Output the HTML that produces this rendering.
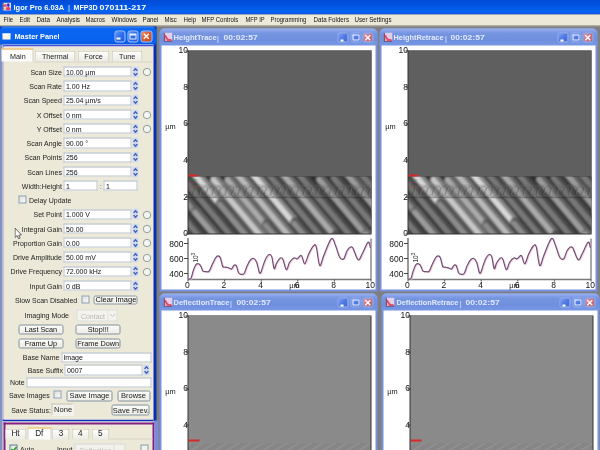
<!DOCTYPE html>
<html><head><meta charset="utf-8"><style>
*{margin:0;padding:0;box-sizing:border-box}
html,body{width:600px;height:450px;overflow:hidden;background:#7f7f7f;font-family:"Liberation Sans",sans-serif;position:relative}
.a{position:absolute}
.t{position:absolute;white-space:nowrap;line-height:1}
.mi{position:absolute;font-size:6.6px;color:#151515;white-space:nowrap;line-height:1}
.lab{position:absolute;font-size:7px;color:#1c1c1c;white-space:nowrap;line-height:1}
.r{text-align:right}
.inp{position:absolute;background:#fff;border:1px solid #b9c4cf;border-top-color:#a9b5c2}
.itx{position:absolute;font-size:7px;color:#111;white-space:nowrap;line-height:1}
.radio{position:absolute;width:8px;height:8px;border-radius:50%;border:1px solid #9a9a9a;background:#f2f2ee}
.btn{position:absolute;border:1px solid #8c9aa8;border-radius:2px;background:linear-gradient(#fbfbf9,#edece6)}
.cb{position:absolute;width:8px;height:8px;border:1px solid #8aa2bd;background:linear-gradient(135deg,#e0e0d8,#fafaf8)}
.tab{position:absolute;border:1px solid #c9c7ba;border-bottom:none;border-radius:2px 2px 0 0;background:linear-gradient(#fdfdfc,#ecebe5)}
.gw{position:absolute;width:218px;background:#7890e0;border-radius:5px 5px 0 0}
.gt{position:absolute;font-size:7.3px;color:#e2eafb;font-weight:bold;white-space:nowrap;line-height:1}
.yl{position:absolute;font-size:7.4px;color:#151515;line-height:1;white-space:nowrap}
.gb{position:absolute;width:11px;height:10.5px;border-radius:2px;border:1px solid #d4dcf6}
</style></head><body><div id="root" style="position:absolute;left:-1px;top:-1px;width:602px;height:452px;overflow:hidden;background:#7f7f7f;transform:translate(0.5px,0.5px);will-change:transform"><div style="position:absolute;left:1px;top:1px;width:601px;height:451px">
<div class="a" style="left:-1px;top:-1px;width:602px;height:14.6px;background:linear-gradient(#004ad4,#0052e0 35%,#0862f2 80%,#0a5cea 92%,#0848c8)"></div>
<div class="a" style="left:-1px;top:13.6px;width:602px;height:11.4px;background:#ece9d8"></div>
<div class="a" style="left:-1px;top:25px;width:602px;height:1px;background:#a9a69a"></div>
<svg class="a" style="left:2px;top:1.5px" width="8.5" height="8.5"><rect x="0" y="0" width="8.5" height="8.5" fill="#eed8e6"/><ellipse cx="2.8" cy="3" rx="1.8" ry="1.6" fill="#e06070"/><ellipse cx="5.6" cy="6.3" rx="2.6" ry="1.8" fill="#d84858"/><ellipse cx="2.5" cy="6.5" rx="1.3" ry="1.2" fill="#f2b8c8"/><ellipse cx="5.8" cy="2.6" rx="1.3" ry="1.8" fill="#2030d8"/><path d="M0.5 0V8.5" stroke="#503040" stroke-width="1"/></svg>
<div class="t" style="left:13.00px;top:3.07px;font-size:7.6px;font-weight:bold;color:#fff;transform:scaleX(0.983);transform-origin:0 0">Igor Pro 6.03A</div>
<div class="t" style="left:67.60px;top:3.37px;font-size:7.6px;color:#e8f0ff">|</div>
<div class="t" style="left:72.50px;top:3.07px;font-size:7.6px;font-weight:bold;color:#fff;transform:scaleX(0.935);transform-origin:0 0">MFP3D</div>
<div class="t" style="left:99.00px;top:3.07px;font-size:7.6px;font-weight:bold;color:#fff;transform:scaleX(1.177);transform-origin:0 0">070111-217</div>
<div class="mi" style="left:2.60px;top:16.04px;font-size:6.8px;transform:scaleX(0.865);transform-origin:0 0">File</div>
<div class="mi" style="left:18.60px;top:16.04px;font-size:6.8px;transform:scaleX(0.895);transform-origin:0 0">Edit</div>
<div class="mi" style="left:35.60px;top:16.04px;font-size:6.8px;transform:scaleX(0.941);transform-origin:0 0">Data</div>
<div class="mi" style="left:55.60px;top:16.04px;font-size:6.8px;transform:scaleX(0.929);transform-origin:0 0">Analysis</div>
<div class="mi" style="left:84.60px;top:16.04px;font-size:6.8px;transform:scaleX(0.873);transform-origin:0 0">Macros</div>
<div class="mi" style="left:110.60px;top:16.04px;font-size:6.8px;transform:scaleX(0.925);transform-origin:0 0">Windows</div>
<div class="mi" style="left:142.40px;top:16.04px;font-size:6.8px;transform:scaleX(0.914);transform-origin:0 0">Panel</div>
<div class="mi" style="left:164.10px;top:16.04px;font-size:6.8px;transform:scaleX(0.871);transform-origin:0 0">Misc</div>
<div class="mi" style="left:182.80px;top:16.04px;font-size:6.8px;transform:scaleX(0.900);transform-origin:0 0">Help</div>
<div class="mi" style="left:201.40px;top:16.04px;font-size:6.8px;transform:scaleX(0.886);transform-origin:0 0">MFP Controls</div>
<div class="mi" style="left:244.60px;top:16.04px;font-size:6.8px;transform:scaleX(0.850);transform-origin:0 0">MFP IP</div>
<div class="mi" style="left:270.30px;top:16.04px;font-size:6.8px;transform:scaleX(0.877);transform-origin:0 0">Programming</div>
<div class="mi" style="left:312.60px;top:16.04px;font-size:6.8px;transform:scaleX(0.912);transform-origin:0 0">Data Folders</div>
<div class="mi" style="left:354.10px;top:16.04px;font-size:6.8px;transform:scaleX(0.906);transform-origin:0 0">User Settings</div>
<div class="a" style="left:-1px;top:26px;width:156.6px;height:395.5px;background:#0a2eb0"></div>
<div class="a" style="left:-1px;top:43px;width:153.5px;height:409px;background:#ece9d8"></div>
<div class="a" style="left:-1px;top:421px;width:156px;height:31px;background:#ece9d8"></div>
<div class="a" style="left:-1px;top:43px;width:2.5px;height:409px;background:#8090c0"></div>
<div class="a" style="left:-1px;top:26px;width:157px;height:18px;border-radius:5px 5px 0 0;background:linear-gradient(#3a8af8,#0a66f2 12%,#0862ee 78%,#085ae4)"></div>
<div class="a" style="left:2px;top:33px;width:8px;height:5.5px;background:#fffbe8;border-top:1px solid #fff"></div>
<div class="t" style="left:14.00px;top:32.08px;font-size:7.7px;font-weight:bold;color:#fff;transform:scaleX(0.950);transform-origin:0 0">Master Panel</div>
<div class="a" style="left:113.8px;top:30px;width:11.4px;height:11.6px;border-radius:2.5px;border:1px solid #a8c4fa;background:linear-gradient(135deg,#6c9cf8,#3070ec 45%,#2058dc)"></div>
<div class="a" style="left:116.39999999999999px;top:37.4px;width:4px;height:1.8px;background:#fff"></div>
<div class="a" style="left:126.8px;top:30px;width:11.4px;height:11.6px;border-radius:2.5px;border:1px solid #a8c4fa;background:linear-gradient(135deg,#6c9cf8,#3070ec 45%,#2058dc)"></div>
<div class="a" style="left:129.1px;top:33.2px;width:6.8px;height:6.2px;border:1px solid #e8f0ff;border-top-width:2px"></div>
<div class="a" style="left:140.2px;top:30px;width:11.4px;height:11.6px;border-radius:2.5px;border:1px solid #a8c4fa;background:linear-gradient(135deg,#f09070,#e05a2a 45%,#d04818)"></div>
<svg class="a" style="left:140.2px;top:30px" width="12" height="12"><path d="M3.3 3.3L8.3 8.3M8.3 3.3L3.3 8.3" stroke="#fff" stroke-width="1.4"/></svg>
<div class="a" style="left:1.8px;top:44.3px;width:151px;height:376.9px;border:1.8px solid #4a4ee2;border-top-width:2.6px;border-bottom:2px solid #0b30c0;border-right:none;border-top-left-radius:2px"></div>
<div class="a" style="left:-0.6px;top:-0.8px;width:601px;height:451px">
<div class="a" style="left:2px;top:49px;width:32px;height:13px;background:#fcfcfb;border-top:1.6px solid #e8a830;border-right:1px solid #d0cec2"></div>
<div class="lab" style="left:2px;width:32px;text-align:center;top:52.51px;font-size:7.2px;color:#1a1a1a">Main</div>
<div class="tab" style="left:35px;top:51.2px;width:40.5px;height:10.5px"></div>
<div class="lab" style="left:35px;width:40.5px;text-align:center;top:52.51px;font-size:7.2px;color:#1a1a1a">Thermal</div>
<div class="tab" style="left:77.3px;top:51.2px;width:32.7px;height:10.5px"></div>
<div class="lab" style="left:77.3px;width:32.7px;text-align:center;top:52.51px;font-size:7.2px;color:#1a1a1a">Force</div>
<div class="tab" style="left:112px;top:51.2px;width:30.5px;height:10.5px"></div>
<div class="lab" style="left:112px;width:30.5px;text-align:center;top:52.51px;font-size:7.2px;color:#1a1a1a">Tune</div>
<div class="a" style="left:34px;top:61.5px;width:119px;height:1px;background:#d8d6ca"></div>
<div class="lab r" style="right:539.00px;top:68.57px;font-size:7.0px;">Scan Size</div>
<div class="inp" style="left:63.8px;top:67.00px;width:68px;height:10.2px"></div>
<div class="itx" style="left:66.00px;top:68.57px;font-size:7.0px;">10.00 µm</div>
<svg class="a" style="left:132.2px;top:66.70px" width="6" height="11"><rect x="0" y="0" width="6" height="11" rx="1" fill="#cdd8f4"/><path d="M1.1 4.4L3 2.3L4.9 4.4M1.1 6.6L3 8.7L4.9 6.6" fill="none" stroke="#3c5cb0" stroke-width="1.3"/></svg>
<svg class="a" style="left:142.1px;top:68.20px" width="9" height="9"><circle cx="4.5" cy="4.5" r="3.7" fill="#f2f4f0" stroke="#8c9490" stroke-width="0.9"/></svg>
<div class="lab r" style="right:539.00px;top:82.82px;font-size:7.0px;">Scan Rate</div>
<div class="inp" style="left:63.8px;top:81.25px;width:68px;height:10.2px"></div>
<div class="itx" style="left:66.00px;top:82.82px;font-size:7.0px;">1.00 Hz</div>
<svg class="a" style="left:132.2px;top:80.95px" width="6" height="11"><rect x="0" y="0" width="6" height="11" rx="1" fill="#cdd8f4"/><path d="M1.1 4.4L3 2.3L4.9 4.4M1.1 6.6L3 8.7L4.9 6.6" fill="none" stroke="#3c5cb0" stroke-width="1.3"/></svg>
<div class="lab r" style="right:539.00px;top:97.07px;font-size:7.0px;">Scan Speed</div>
<div class="inp" style="left:63.8px;top:95.50px;width:68px;height:10.2px"></div>
<div class="itx" style="left:66.00px;top:97.07px;font-size:7.0px;">25.04 µm/s</div>
<svg class="a" style="left:132.2px;top:95.20px" width="6" height="11"><rect x="0" y="0" width="6" height="11" rx="1" fill="#cdd8f4"/><path d="M1.1 4.4L3 2.3L4.9 4.4M1.1 6.6L3 8.7L4.9 6.6" fill="none" stroke="#3c5cb0" stroke-width="1.3"/></svg>
<div class="lab r" style="right:539.00px;top:111.32px;font-size:7.0px;">X Offset</div>
<div class="inp" style="left:63.8px;top:109.75px;width:68px;height:10.2px"></div>
<div class="itx" style="left:66.00px;top:111.32px;font-size:7.0px;">0 nm</div>
<svg class="a" style="left:132.2px;top:109.45px" width="6" height="11"><rect x="0" y="0" width="6" height="11" rx="1" fill="#cdd8f4"/><path d="M1.1 4.4L3 2.3L4.9 4.4M1.1 6.6L3 8.7L4.9 6.6" fill="none" stroke="#3c5cb0" stroke-width="1.3"/></svg>
<svg class="a" style="left:142.1px;top:110.95px" width="9" height="9"><circle cx="4.5" cy="4.5" r="3.7" fill="#f2f4f0" stroke="#8c9490" stroke-width="0.9"/></svg>
<div class="lab r" style="right:539.00px;top:125.57px;font-size:7.0px;">Y Offset</div>
<div class="inp" style="left:63.8px;top:124.00px;width:68px;height:10.2px"></div>
<div class="itx" style="left:66.00px;top:125.57px;font-size:7.0px;">0 nm</div>
<svg class="a" style="left:132.2px;top:123.70px" width="6" height="11"><rect x="0" y="0" width="6" height="11" rx="1" fill="#cdd8f4"/><path d="M1.1 4.4L3 2.3L4.9 4.4M1.1 6.6L3 8.7L4.9 6.6" fill="none" stroke="#3c5cb0" stroke-width="1.3"/></svg>
<svg class="a" style="left:142.1px;top:125.20px" width="9" height="9"><circle cx="4.5" cy="4.5" r="3.7" fill="#f2f4f0" stroke="#8c9490" stroke-width="0.9"/></svg>
<div class="lab r" style="right:539.00px;top:139.82px;font-size:7.0px;">Scan Angle</div>
<div class="inp" style="left:63.8px;top:138.25px;width:68px;height:10.2px"></div>
<div class="itx" style="left:66.00px;top:139.82px;font-size:7.0px;">90.00 °</div>
<svg class="a" style="left:132.2px;top:137.95px" width="6" height="11"><rect x="0" y="0" width="6" height="11" rx="1" fill="#cdd8f4"/><path d="M1.1 4.4L3 2.3L4.9 4.4M1.1 6.6L3 8.7L4.9 6.6" fill="none" stroke="#3c5cb0" stroke-width="1.3"/></svg>
<div class="lab r" style="right:539.00px;top:154.07px;font-size:7.0px;">Scan Points</div>
<div class="inp" style="left:63.8px;top:152.50px;width:68px;height:10.2px"></div>
<div class="itx" style="left:66.00px;top:154.07px;font-size:7.0px;">256</div>
<svg class="a" style="left:132.2px;top:152.20px" width="6" height="11"><rect x="0" y="0" width="6" height="11" rx="1" fill="#cdd8f4"/><path d="M1.1 4.4L3 2.3L4.9 4.4M1.1 6.6L3 8.7L4.9 6.6" fill="none" stroke="#3c5cb0" stroke-width="1.3"/></svg>
<div class="lab r" style="right:539.00px;top:168.32px;font-size:7.0px;">Scan Lines</div>
<div class="inp" style="left:63.8px;top:166.75px;width:68px;height:10.2px"></div>
<div class="itx" style="left:66.00px;top:168.32px;font-size:7.0px;">256</div>
<svg class="a" style="left:132.2px;top:166.45px" width="6" height="11"><rect x="0" y="0" width="6" height="11" rx="1" fill="#cdd8f4"/><path d="M1.1 4.4L3 2.3L4.9 4.4M1.1 6.6L3 8.7L4.9 6.6" fill="none" stroke="#3c5cb0" stroke-width="1.3"/></svg>
<div class="lab r" style="right:539.00px;top:182.57px;font-size:7.0px;">Width:Height</div>
<div class="inp" style="left:64px;top:181.00px;width:33.5px;height:10.2px"></div>
<div class="itx" style="left:66.00px;top:182.57px;font-size:7.0px;">1</div>
<div class="itx" style="left:99.80px;top:182.57px;font-size:7.0px;color:#666">:</div>
<div class="inp" style="left:104px;top:181.00px;width:33.5px;height:10.2px"></div>
<div class="itx" style="left:106.00px;top:182.57px;font-size:7.0px;">1</div>
<div class="cb" style="left:18.7px;top:196px"></div>
<div class="lab" style="left:29.00px;top:196.82px;font-size:7.0px;">Delay Update</div>
<div class="lab r" style="right:539.00px;top:211.07px;font-size:7.0px;">Set Point</div>
<div class="inp" style="left:63.8px;top:209.50px;width:68px;height:10.2px"></div>
<div class="itx" style="left:66.00px;top:211.07px;font-size:7.0px;">1.000 V</div>
<svg class="a" style="left:132.2px;top:209.20px" width="6" height="11"><rect x="0" y="0" width="6" height="11" rx="1" fill="#cdd8f4"/><path d="M1.1 4.4L3 2.3L4.9 4.4M1.1 6.6L3 8.7L4.9 6.6" fill="none" stroke="#3c5cb0" stroke-width="1.3"/></svg>
<svg class="a" style="left:142.1px;top:210.70px" width="9" height="9"><circle cx="4.5" cy="4.5" r="3.7" fill="#f2f4f0" stroke="#8c9490" stroke-width="0.9"/></svg>
<div class="lab r" style="right:539.00px;top:225.32px;font-size:7.0px;">Integral Gain</div>
<div class="inp" style="left:63.8px;top:223.75px;width:68px;height:10.2px"></div>
<div class="itx" style="left:66.00px;top:225.32px;font-size:7.0px;">50.00</div>
<svg class="a" style="left:132.2px;top:223.45px" width="6" height="11"><rect x="0" y="0" width="6" height="11" rx="1" fill="#cdd8f4"/><path d="M1.1 4.4L3 2.3L4.9 4.4M1.1 6.6L3 8.7L4.9 6.6" fill="none" stroke="#3c5cb0" stroke-width="1.3"/></svg>
<svg class="a" style="left:142.1px;top:224.95px" width="9" height="9"><circle cx="4.5" cy="4.5" r="3.7" fill="#f2f4f0" stroke="#8c9490" stroke-width="0.9"/></svg>
<div class="lab r" style="right:539.00px;top:239.57px;font-size:7.0px;">Proportion Gain</div>
<div class="inp" style="left:63.8px;top:238.00px;width:68px;height:10.2px"></div>
<div class="itx" style="left:66.00px;top:239.57px;font-size:7.0px;">0.00</div>
<svg class="a" style="left:132.2px;top:237.70px" width="6" height="11"><rect x="0" y="0" width="6" height="11" rx="1" fill="#cdd8f4"/><path d="M1.1 4.4L3 2.3L4.9 4.4M1.1 6.6L3 8.7L4.9 6.6" fill="none" stroke="#3c5cb0" stroke-width="1.3"/></svg>
<svg class="a" style="left:142.1px;top:239.20px" width="9" height="9"><circle cx="4.5" cy="4.5" r="3.7" fill="#f2f4f0" stroke="#8c9490" stroke-width="0.9"/></svg>
<div class="lab r" style="right:539.00px;top:253.82px;font-size:7.0px;">Drive Amplitude</div>
<div class="inp" style="left:63.8px;top:252.25px;width:68px;height:10.2px"></div>
<div class="itx" style="left:66.00px;top:253.82px;font-size:7.0px;">50.00 mV</div>
<svg class="a" style="left:132.2px;top:251.95px" width="6" height="11"><rect x="0" y="0" width="6" height="11" rx="1" fill="#cdd8f4"/><path d="M1.1 4.4L3 2.3L4.9 4.4M1.1 6.6L3 8.7L4.9 6.6" fill="none" stroke="#3c5cb0" stroke-width="1.3"/></svg>
<svg class="a" style="left:142.1px;top:253.45px" width="9" height="9"><circle cx="4.5" cy="4.5" r="3.7" fill="#f2f4f0" stroke="#8c9490" stroke-width="0.9"/></svg>
<div class="lab r" style="right:539.00px;top:268.07px;font-size:7.0px;">Drive Frequency</div>
<div class="inp" style="left:63.8px;top:266.50px;width:68px;height:10.2px"></div>
<div class="itx" style="left:66.00px;top:268.07px;font-size:7.0px;">72.000 kHz</div>
<svg class="a" style="left:132.2px;top:266.20px" width="6" height="11"><rect x="0" y="0" width="6" height="11" rx="1" fill="#cdd8f4"/><path d="M1.1 4.4L3 2.3L4.9 4.4M1.1 6.6L3 8.7L4.9 6.6" fill="none" stroke="#3c5cb0" stroke-width="1.3"/></svg>
<svg class="a" style="left:142.1px;top:267.70px" width="9" height="9"><circle cx="4.5" cy="4.5" r="3.7" fill="#f2f4f0" stroke="#8c9490" stroke-width="0.9"/></svg>
<div class="lab r" style="right:539.00px;top:282.32px;font-size:7.0px;">Input Gain</div>
<div class="inp" style="left:63.8px;top:280.75px;width:68px;height:10.2px"></div>
<div class="itx" style="left:66.00px;top:282.32px;font-size:7.0px;">0 dB</div>
<svg class="a" style="left:132.2px;top:280.45px" width="6" height="11"><rect x="0" y="0" width="6" height="11" rx="1" fill="#cdd8f4"/><path d="M1.1 4.4L3 2.3L4.9 4.4M1.1 6.6L3 8.7L4.9 6.6" fill="none" stroke="#3c5cb0" stroke-width="1.3"/></svg>
<div class="lab" style="left:15.00px;top:296.57px;font-size:7.0px;">Slow Scan Disabled</div>
<div class="cb" style="left:81.3px;top:296px"></div>
<div class="btn" style="left:93.3px;top:295.3px;width:44px;height:9.5px"></div>
<div class="lab" style="left:95.60px;top:296.25px;font-size:7.5px;color:#111">Clear Image</div>
<div class="lab" style="left:24.70px;top:311.37px;font-size:7.0px;">Imaging Mode</div>
<div class="a" style="left:76.4px;top:310px;width:41.6px;height:11.3px;border:1px solid #d8dcd8;background:#f4f3ee"></div>
<div class="a" style="left:107.5px;top:311px;width:1px;height:9.3px;background:#e4e4e0"></div>
<div class="itx" style="left:81.00px;top:312.67px;font-size:7.0px;color:#b8b8b4">Contact</div>
<svg class="a" style="left:109px;top:312px" width="8" height="8"><path d="M1.5 2.5L4 5L6.5 2.5" stroke="#c4c4c0" fill="none" stroke-width="1"/></svg>
<div class="btn" style="left:18.7px;top:324.7px;width:44.6px;height:10.0px;border-color:#8494a2"></div>
<div class="lab" style="left:18.7px;width:44.6px;text-align:center;top:326.22px;font-size:7.3px;color:#111">Last Scan</div>
<div class="btn" style="left:76px;top:324.7px;width:44.7px;height:10.0px;border-color:#8494a2"></div>
<div class="lab" style="left:76px;width:44.7px;text-align:center;top:326.22px;font-size:7.3px;color:#111">Stop!!!</div>
<div class="btn" style="left:18.7px;top:338.7px;width:44.6px;height:10.0px;border-color:#8494a2"></div>
<div class="lab" style="left:18.7px;width:44.6px;text-align:center;top:340.22px;font-size:7.3px;color:#111">Frame Up</div>
<div class="btn" style="left:76px;top:338.7px;width:44.7px;height:10.0px;border-color:#8494a2"></div>
<div class="lab" style="left:76px;width:44.7px;text-align:center;top:340.22px;font-size:7.3px;color:#111">Frame Down</div>
<div class="lab r" style="right:541.50px;top:353.77px;font-size:7.0px;">Base Name</div>
<div class="inp" style="left:61.3px;top:353px;width:90.7px;height:9.6px"></div>
<div class="itx" style="left:63.50px;top:353.97px;font-size:7.0px;">Image</div>
<div class="lab r" style="right:538.00px;top:366.37px;font-size:7.0px;">Base Suffix</div>
<div class="inp" style="left:65px;top:365px;width:77.7px;height:10.7px"></div>
<div class="itx" style="left:67.00px;top:366.57px;font-size:7.0px;">0007</div>
<svg class="a" style="left:143.5px;top:364.80px" width="6" height="11"><rect x="0" y="0" width="6" height="11" rx="1" fill="#cdd8f4"/><path d="M1.1 4.4L3 2.3L4.9 4.4M1.1 6.6L3 8.7L4.9 6.6" fill="none" stroke="#3c5cb0" stroke-width="1.3"/></svg>
<div class="lab" style="left:10.00px;top:379.07px;font-size:7.0px;">Note</div>
<div class="inp" style="left:27px;top:377.7px;width:125px;height:10.6px"></div>
<div class="lab" style="left:9.00px;top:391.77px;font-size:7.0px;">Save Images</div>
<div class="cb" style="left:54px;top:391px"></div>
<div class="btn" style="left:67px;top:390.6px;width:45.5px;height:10.8px;border-color:#8494a2"></div>
<div class="lab" style="left:67px;width:45px;text-align:center;top:392.05px;font-size:7.5px;color:#1a1a1a">Save Image</div>
<div class="btn" style="left:117.3px;top:390.6px;width:33px;height:10.8px;border-color:#8494a2"></div>
<div class="lab" style="left:117.3px;width:32.7px;text-align:center;top:392.05px;font-size:7.5px;color:#1a1a1a">Browse</div>
<div class="lab r" style="right:550.00px;top:406.37px;font-size:7.0px;">Save Status:</div>
<div class="a" style="left:52px;top:403.7px;width:21.5px;height:12.6px;border:1px solid #f8f8f4;border-top-color:#c4c0b0;border-left-color:#c4c0b0;background:#f3f2ea"></div>
<div class="itx" style="left:54.20px;top:406.17px;font-size:7.6px;color:#222">None</div>
<div class="btn" style="left:111.5px;top:405.2px;width:38.5px;height:10.6px;border-color:#8494a2"></div>
<div class="lab" style="left:112px;width:38px;text-align:center;top:406.45px;font-size:7.5px;color:#1a1a1a">Save Prev.</div>
<div class="a" style="left:4px;top:422.3px;width:151px;height:40px;border:2px solid #862088;border-bottom:none"></div>
<div class="a" style="left:155px;top:421px;width:4px;height:31px;background:#7c8bd8"></div>
<div class="tab" style="left:4.5px;top:428.8px;width:22.2px;height:10.7px"></div>
<div class="lab" style="left:4.5px;width:22.2px;text-align:center;top:430.26px;font-size:8.2px;color:#1a1a1a">Ht</div>
<div class="a" style="left:27.5px;top:427.6px;width:23.7px;height:12px;background:#fcfcfb;border-top:1.6px solid #e8b040;border-left:1px solid #d0cec2;border-right:1px solid #d0cec2"></div>
<div class="lab" style="left:27.5px;width:23.7px;text-align:center;top:430.26px;font-size:8.2px;color:#1a1a1a">Df</div>
<div class="tab" style="left:52px;top:428.8px;width:18.0px;height:10.7px"></div>
<div class="lab" style="left:52px;width:18.0px;text-align:center;top:430.26px;font-size:8.2px;color:#1a1a1a">3</div>
<div class="tab" style="left:71.5px;top:428.8px;width:17.8px;height:10.7px"></div>
<div class="lab" style="left:71.5px;width:17.8px;text-align:center;top:430.26px;font-size:8.2px;color:#1a1a1a">4</div>
<div class="tab" style="left:91.5px;top:428.8px;width:17.8px;height:10.7px"></div>
<div class="lab" style="left:91.5px;width:17.8px;text-align:center;top:430.26px;font-size:8.2px;color:#1a1a1a">5</div>
<div class="a" style="left:110px;top:439px;width:43px;height:1px;background:#d8d6ca"></div>
<div class="cb" style="left:9.3px;top:445px;border-color:#5c7ca0"></div>
<svg class="a" style="left:9.3px;top:445px" width="9" height="9"><path d="M2 4.5L3.8 6.5L7 2.5" stroke="#22a022" stroke-width="1.6" fill="none"/></svg>
<div class="lab" style="left:20.00px;top:446.07px;font-size:7.0px;">Auto</div>
<div class="lab" style="left:57.00px;top:446.07px;font-size:7.0px;">Input</div>
<div class="a" style="left:75px;top:444px;width:51px;height:10px;border:1px solid #d4d8d4;background:#f2f1ec"></div>
<div class="itx" style="left:80.00px;top:446.57px;font-size:7.0px;color:#c0c0bc">Deflection</div>
<div class="a" style="left:114px;top:445px;width:1px;height:8px;background:#dcdcd8"></div>
<div class="a" style="left:141px;top:445px;width:7.5px;height:7px;border:1px solid #8a9aa8;background:#f2f2ee"></div>
<svg class="a" style="left:14.3px;top:227.6px" width="9" height="13"><path d="M0.6 0.6V10L2.7 8L4.1 11.2L5.6 10.6L4.3 7.6L6.9 7.4Z" fill="#fff" stroke="#404040" stroke-width="0.8" stroke-linejoin="round"/></svg>
</div>
<div class="gw" style="left:159px;top:28px;height:263px"></div>
<div class="a" style="left:159px;top:28px;width:218px;height:17px;border-radius:5px 5px 0 0;background:linear-gradient(#9cb4f0,#84a0e8 14%,#7494e0 32%,#7090df 68%,#7698e4)"></div>
<div class="a" style="left:161px;top:44.5px;width:214px;height:244.5px;background:#fff"></div>
<svg class="a" style="left:162.6px;top:31.5px" width="9" height="9.5"><rect x="0" y="0" width="9" height="9" fill="#e6cdea"/><path d="M1.2 2.2C2.6 1.8 3.4 4 4.2 5.6C5 7 6.2 6.2 7 6.6C8 7 8.6 7.6 9 8.6H1.2Z" fill="#e0506e"/><path d="M2 5.5C2.6 6.5 3.6 7.2 3.6 8.6H1.2V5Z" fill="#f2e0f0" opacity="0.6"/><path d="M0.6 0V9H9" stroke="#3a2a40" stroke-width="1.1" fill="none"/></svg>
<div class="gt" style="left:172.90px;top:33.34px;font-size:7.4px;transform:scaleX(1.023);transform-origin:0 0">HeightTrace</div>
<div class="gt" style="left:216.50px;top:33.64px;font-size:7.4px;font-weight:normal">|</div>
<div class="gt" style="left:222.50px;top:33.34px;font-size:7.4px;transform:scaleX(1.155);transform-origin:0 0">00:02:57</div>
<div class="gb" style="left:337px;top:32px;width:10.6px;height:10.4px;border:0.8px solid #98aeea;background:linear-gradient(135deg,#84a6f4,#5079e4 50%,#4068d8)"></div>
<div class="a" style="left:339.6px;top:38.6px;width:3.6px;height:2px;background:#fff"></div>
<div class="gb" style="left:350px;top:32px;width:10.6px;height:10.4px;border:0.8px solid #98aeea;background:linear-gradient(135deg,#84a6f4,#5079e4 50%,#4068d8)"></div>
<div class="a" style="left:352px;top:34px;width:6.8px;height:6.4px;border:0.8px solid #f4f8ff;border-top-width:1.8px"></div>
<div class="gb" style="left:362.2px;top:32px;width:10.6px;height:10.4px;border:0.8px solid #98aeea;background:linear-gradient(135deg,#e4a0b0,#c87080 50%,#b86474)"></div>
<svg class="a" style="left:362.2px;top:32px" width="11" height="11"><path d="M2.8 2.8L7.8 7.8M7.8 2.8L2.8 7.8" stroke="#fff" stroke-width="1.3"/></svg>
<div class="a" style="left:187.0px;top:49.5px;width:184px;height:184px;background:#333"></div>
<div class="a" style="left:187.5px;top:50px;width:183px;height:126px;background:#5f5f5f"></div>
<svg class="a" style="left:187.5px;top:176px" width="183" height="57" viewBox="0 0 183 57"><defs><filter id="rb" x="-20%" y="-20%" width="140%" height="140%"><feGaussianBlur stdDeviation="1.3"/></filter></defs><rect x="0" y="0" width="183" height="57" fill="#2c2c2c"/><g filter="url(#rb)"><path d="M-71.3 -1.6L-11.4 69.8" stroke="rgb(133,133,133)" stroke-width="10.5" stroke-linecap="round"/><path d="M-72.8 -0.8L-12.9 70.6" stroke="rgb(215,215,215)" stroke-width="5.5" stroke-linecap="round"/><path d="M-55.0 -1.2L-3.9 59.7" stroke="rgb(133,133,133)" stroke-width="10.5" stroke-linecap="round"/><path d="M-56.5 -0.4L-5.4 60.5" stroke="rgb(215,215,215)" stroke-width="5.5" stroke-linecap="round"/><path d="M-38.7 -1.2L27.9 78.1" stroke="rgb(74,74,74)" stroke-width="10.5" stroke-linecap="round"/><path d="M-40.2 -0.4L26.4 78.9" stroke="rgb(120,120,120)" stroke-width="5.5" stroke-linecap="round"/><path d="M-25.3 -4.5L7.8 35.0" stroke="rgb(86,86,86)" stroke-width="10.5" stroke-linecap="round"/><path d="M-26.8 -3.7L6.3 35.8" stroke="rgb(140,140,140)" stroke-width="5.5" stroke-linecap="round"/><path d="M7.9 35.1L45.9 80.3" stroke="rgb(96,96,96)" stroke-width="10.5" stroke-linecap="round"/><path d="M6.4 35.9L44.4 81.1" stroke="rgb(155,155,155)" stroke-width="5.5" stroke-linecap="round"/><path d="M-9.1 -4.4L51.6 68.0" stroke="rgb(74,74,74)" stroke-width="10.5" stroke-linecap="round"/><path d="M-10.6 -3.6L50.1 68.8" stroke="rgb(120,120,120)" stroke-width="5.5" stroke-linecap="round"/><path d="M3.5 -7.6L32.5 26.9" stroke="rgb(133,133,133)" stroke-width="10.5" stroke-linecap="round"/><path d="M2.0 -6.8L31.0 27.7" stroke="rgb(215,215,215)" stroke-width="5.5" stroke-linecap="round"/><path d="M32.5 26.9L93.8 99.9" stroke="rgb(86,86,86)" stroke-width="10.5" stroke-linecap="round"/><path d="M31.0 27.7L92.3 100.7" stroke="rgb(140,140,140)" stroke-width="5.5" stroke-linecap="round"/><path d="M26.5 2.6L77.9 63.9" stroke="rgb(124,124,124)" stroke-width="10.5" stroke-linecap="round"/><path d="M25.0 3.4L76.4 64.7" stroke="rgb(200,200,200)" stroke-width="5.5" stroke-linecap="round"/><path d="M40.6 2.7L77.7 47.0" stroke="rgb(105,105,105)" stroke-width="10.5" stroke-linecap="round"/><path d="M39.1 3.5L76.2 47.8" stroke="rgb(170,170,170)" stroke-width="5.5" stroke-linecap="round"/><path d="M78.7 48.1L122.7 100.6" stroke="rgb(86,86,86)" stroke-width="10.5" stroke-linecap="round"/><path d="M77.2 48.9L121.2 101.4" stroke="rgb(140,140,140)" stroke-width="5.5" stroke-linecap="round"/><path d="M48.3 -5.1L111.4 70.0" stroke="rgb(114,114,114)" stroke-width="10.5" stroke-linecap="round"/><path d="M46.8 -4.3L109.9 70.8" stroke="rgb(185,185,185)" stroke-width="5.5" stroke-linecap="round"/><path d="M63.9 -5.1L105.8 44.9" stroke="rgb(133,133,133)" stroke-width="10.5" stroke-linecap="round"/><path d="M62.4 -4.3L104.3 45.7" stroke="rgb(215,215,215)" stroke-width="5.5" stroke-linecap="round"/><path d="M106.8 46.0L164.8 115.2" stroke="rgb(86,86,86)" stroke-width="10.5" stroke-linecap="round"/><path d="M105.3 46.8L163.3 116.0" stroke="rgb(140,140,140)" stroke-width="5.5" stroke-linecap="round"/><path d="M76.6 -8.5L146.3 74.5" stroke="rgb(74,74,74)" stroke-width="10.5" stroke-linecap="round"/><path d="M75.1 -7.7L144.8 75.3" stroke="rgb(120,120,120)" stroke-width="5.5" stroke-linecap="round"/><path d="M94.8 -4.2L146.7 57.6" stroke="rgb(105,105,105)" stroke-width="10.5" stroke-linecap="round"/><path d="M93.3 -3.4L145.2 58.4" stroke="rgb(170,170,170)" stroke-width="5.5" stroke-linecap="round"/><path d="M147.8 59.0L200.9 122.3" stroke="rgb(74,74,74)" stroke-width="10.5" stroke-linecap="round"/><path d="M146.3 59.8L199.4 123.1" stroke="rgb(120,120,120)" stroke-width="5.5" stroke-linecap="round"/><path d="M112.7 -1.5L181.5 80.4" stroke="rgb(74,74,74)" stroke-width="10.5" stroke-linecap="round"/><path d="M111.2 -0.7L180.0 81.2" stroke="rgb(120,120,120)" stroke-width="5.5" stroke-linecap="round"/><path d="M132.2 2.4L175.5 54.0" stroke="rgb(96,96,96)" stroke-width="10.5" stroke-linecap="round"/><path d="M130.7 3.2L174.0 54.8" stroke="rgb(155,155,155)" stroke-width="5.5" stroke-linecap="round"/><path d="M178.4 57.4L217.8 104.4" stroke="rgb(105,105,105)" stroke-width="10.5" stroke-linecap="round"/><path d="M176.9 58.2L216.3 105.2" stroke="rgb(170,170,170)" stroke-width="5.5" stroke-linecap="round"/><path d="M146.5 0.6L211.3 77.9" stroke="rgb(74,74,74)" stroke-width="10.5" stroke-linecap="round"/><path d="M145.0 1.4L209.8 78.7" stroke="rgb(120,120,120)" stroke-width="5.5" stroke-linecap="round"/><path d="M156.9 -6.6L207.2 53.4" stroke="rgb(96,96,96)" stroke-width="10.5" stroke-linecap="round"/><path d="M155.4 -5.8L205.7 54.2" stroke="rgb(155,155,155)" stroke-width="5.5" stroke-linecap="round"/><path d="M210.2 56.9L253.3 108.3" stroke="rgb(124,124,124)" stroke-width="10.5" stroke-linecap="round"/><path d="M208.7 57.7L251.8 109.1" stroke="rgb(200,200,200)" stroke-width="5.5" stroke-linecap="round"/><path d="M172.4 -5.3L208.8 38.0" stroke="rgb(74,74,74)" stroke-width="10.5" stroke-linecap="round"/><path d="M170.9 -4.5L207.3 38.8" stroke="rgb(120,120,120)" stroke-width="5.5" stroke-linecap="round"/><path d="M210.8 40.4L269.8 110.8" stroke="rgb(96,96,96)" stroke-width="10.5" stroke-linecap="round"/><path d="M209.3 41.2L268.3 111.6" stroke="rgb(155,155,155)" stroke-width="5.5" stroke-linecap="round"/></g><rect x="0" y="8" width="183" height="13" fill="rgba(90,90,90,0.22)"/><ellipse cx="2.0" cy="15" rx="3.4" ry="5.8" fill="none" stroke="rgba(25,25,25,0.28)" stroke-width="0.7" transform="rotate(35 2.0 15)"/><ellipse cx="3.0" cy="14.5" rx="3.4" ry="5.8" fill="none" stroke="rgba(220,220,220,0.18)" stroke-width="0.6" transform="rotate(35 3.0 14.5)"/><ellipse cx="8.5" cy="15" rx="3.4" ry="5.8" fill="none" stroke="rgba(25,25,25,0.28)" stroke-width="0.7" transform="rotate(35 8.5 15)"/><ellipse cx="9.5" cy="14.5" rx="3.4" ry="5.8" fill="none" stroke="rgba(220,220,220,0.18)" stroke-width="0.6" transform="rotate(35 9.5 14.5)"/><ellipse cx="15.0" cy="15" rx="3.4" ry="5.8" fill="none" stroke="rgba(25,25,25,0.28)" stroke-width="0.7" transform="rotate(35 15.0 15)"/><ellipse cx="16.0" cy="14.5" rx="3.4" ry="5.8" fill="none" stroke="rgba(220,220,220,0.18)" stroke-width="0.6" transform="rotate(35 16.0 14.5)"/><ellipse cx="21.5" cy="15" rx="3.4" ry="5.8" fill="none" stroke="rgba(25,25,25,0.28)" stroke-width="0.7" transform="rotate(35 21.5 15)"/><ellipse cx="22.5" cy="14.5" rx="3.4" ry="5.8" fill="none" stroke="rgba(220,220,220,0.18)" stroke-width="0.6" transform="rotate(35 22.5 14.5)"/><ellipse cx="28.0" cy="15" rx="3.4" ry="5.8" fill="none" stroke="rgba(25,25,25,0.28)" stroke-width="0.7" transform="rotate(35 28.0 15)"/><ellipse cx="29.0" cy="14.5" rx="3.4" ry="5.8" fill="none" stroke="rgba(220,220,220,0.18)" stroke-width="0.6" transform="rotate(35 29.0 14.5)"/><ellipse cx="34.5" cy="15" rx="3.4" ry="5.8" fill="none" stroke="rgba(25,25,25,0.28)" stroke-width="0.7" transform="rotate(35 34.5 15)"/><ellipse cx="35.5" cy="14.5" rx="3.4" ry="5.8" fill="none" stroke="rgba(220,220,220,0.18)" stroke-width="0.6" transform="rotate(35 35.5 14.5)"/><ellipse cx="41.0" cy="15" rx="3.4" ry="5.8" fill="none" stroke="rgba(25,25,25,0.28)" stroke-width="0.7" transform="rotate(35 41.0 15)"/><ellipse cx="42.0" cy="14.5" rx="3.4" ry="5.8" fill="none" stroke="rgba(220,220,220,0.18)" stroke-width="0.6" transform="rotate(35 42.0 14.5)"/><ellipse cx="47.5" cy="15" rx="3.4" ry="5.8" fill="none" stroke="rgba(25,25,25,0.28)" stroke-width="0.7" transform="rotate(35 47.5 15)"/><ellipse cx="48.5" cy="14.5" rx="3.4" ry="5.8" fill="none" stroke="rgba(220,220,220,0.18)" stroke-width="0.6" transform="rotate(35 48.5 14.5)"/><ellipse cx="54.0" cy="15" rx="3.4" ry="5.8" fill="none" stroke="rgba(25,25,25,0.28)" stroke-width="0.7" transform="rotate(35 54.0 15)"/><ellipse cx="55.0" cy="14.5" rx="3.4" ry="5.8" fill="none" stroke="rgba(220,220,220,0.18)" stroke-width="0.6" transform="rotate(35 55.0 14.5)"/><ellipse cx="60.5" cy="15" rx="3.4" ry="5.8" fill="none" stroke="rgba(25,25,25,0.28)" stroke-width="0.7" transform="rotate(35 60.5 15)"/><ellipse cx="61.5" cy="14.5" rx="3.4" ry="5.8" fill="none" stroke="rgba(220,220,220,0.18)" stroke-width="0.6" transform="rotate(35 61.5 14.5)"/><ellipse cx="67.0" cy="15" rx="3.4" ry="5.8" fill="none" stroke="rgba(25,25,25,0.28)" stroke-width="0.7" transform="rotate(35 67.0 15)"/><ellipse cx="68.0" cy="14.5" rx="3.4" ry="5.8" fill="none" stroke="rgba(220,220,220,0.18)" stroke-width="0.6" transform="rotate(35 68.0 14.5)"/><ellipse cx="73.5" cy="15" rx="3.4" ry="5.8" fill="none" stroke="rgba(25,25,25,0.28)" stroke-width="0.7" transform="rotate(35 73.5 15)"/><ellipse cx="74.5" cy="14.5" rx="3.4" ry="5.8" fill="none" stroke="rgba(220,220,220,0.18)" stroke-width="0.6" transform="rotate(35 74.5 14.5)"/><ellipse cx="80.0" cy="15" rx="3.4" ry="5.8" fill="none" stroke="rgba(25,25,25,0.28)" stroke-width="0.7" transform="rotate(35 80.0 15)"/><ellipse cx="81.0" cy="14.5" rx="3.4" ry="5.8" fill="none" stroke="rgba(220,220,220,0.18)" stroke-width="0.6" transform="rotate(35 81.0 14.5)"/><ellipse cx="86.5" cy="15" rx="3.4" ry="5.8" fill="none" stroke="rgba(25,25,25,0.28)" stroke-width="0.7" transform="rotate(35 86.5 15)"/><ellipse cx="87.5" cy="14.5" rx="3.4" ry="5.8" fill="none" stroke="rgba(220,220,220,0.18)" stroke-width="0.6" transform="rotate(35 87.5 14.5)"/><ellipse cx="93.0" cy="15" rx="3.4" ry="5.8" fill="none" stroke="rgba(25,25,25,0.28)" stroke-width="0.7" transform="rotate(35 93.0 15)"/><ellipse cx="94.0" cy="14.5" rx="3.4" ry="5.8" fill="none" stroke="rgba(220,220,220,0.18)" stroke-width="0.6" transform="rotate(35 94.0 14.5)"/><ellipse cx="99.5" cy="15" rx="3.4" ry="5.8" fill="none" stroke="rgba(25,25,25,0.28)" stroke-width="0.7" transform="rotate(35 99.5 15)"/><ellipse cx="100.5" cy="14.5" rx="3.4" ry="5.8" fill="none" stroke="rgba(220,220,220,0.18)" stroke-width="0.6" transform="rotate(35 100.5 14.5)"/><ellipse cx="106.0" cy="15" rx="3.4" ry="5.8" fill="none" stroke="rgba(25,25,25,0.28)" stroke-width="0.7" transform="rotate(35 106.0 15)"/><ellipse cx="107.0" cy="14.5" rx="3.4" ry="5.8" fill="none" stroke="rgba(220,220,220,0.18)" stroke-width="0.6" transform="rotate(35 107.0 14.5)"/><ellipse cx="112.5" cy="15" rx="3.4" ry="5.8" fill="none" stroke="rgba(25,25,25,0.28)" stroke-width="0.7" transform="rotate(35 112.5 15)"/><ellipse cx="113.5" cy="14.5" rx="3.4" ry="5.8" fill="none" stroke="rgba(220,220,220,0.18)" stroke-width="0.6" transform="rotate(35 113.5 14.5)"/><ellipse cx="119.0" cy="15" rx="3.4" ry="5.8" fill="none" stroke="rgba(25,25,25,0.28)" stroke-width="0.7" transform="rotate(35 119.0 15)"/><ellipse cx="120.0" cy="14.5" rx="3.4" ry="5.8" fill="none" stroke="rgba(220,220,220,0.18)" stroke-width="0.6" transform="rotate(35 120.0 14.5)"/><ellipse cx="125.5" cy="15" rx="3.4" ry="5.8" fill="none" stroke="rgba(25,25,25,0.28)" stroke-width="0.7" transform="rotate(35 125.5 15)"/><ellipse cx="126.5" cy="14.5" rx="3.4" ry="5.8" fill="none" stroke="rgba(220,220,220,0.18)" stroke-width="0.6" transform="rotate(35 126.5 14.5)"/><ellipse cx="132.0" cy="15" rx="3.4" ry="5.8" fill="none" stroke="rgba(25,25,25,0.28)" stroke-width="0.7" transform="rotate(35 132.0 15)"/><ellipse cx="133.0" cy="14.5" rx="3.4" ry="5.8" fill="none" stroke="rgba(220,220,220,0.18)" stroke-width="0.6" transform="rotate(35 133.0 14.5)"/><ellipse cx="138.5" cy="15" rx="3.4" ry="5.8" fill="none" stroke="rgba(25,25,25,0.28)" stroke-width="0.7" transform="rotate(35 138.5 15)"/><ellipse cx="139.5" cy="14.5" rx="3.4" ry="5.8" fill="none" stroke="rgba(220,220,220,0.18)" stroke-width="0.6" transform="rotate(35 139.5 14.5)"/><ellipse cx="145.0" cy="15" rx="3.4" ry="5.8" fill="none" stroke="rgba(25,25,25,0.28)" stroke-width="0.7" transform="rotate(35 145.0 15)"/><ellipse cx="146.0" cy="14.5" rx="3.4" ry="5.8" fill="none" stroke="rgba(220,220,220,0.18)" stroke-width="0.6" transform="rotate(35 146.0 14.5)"/><ellipse cx="151.5" cy="15" rx="3.4" ry="5.8" fill="none" stroke="rgba(25,25,25,0.28)" stroke-width="0.7" transform="rotate(35 151.5 15)"/><ellipse cx="152.5" cy="14.5" rx="3.4" ry="5.8" fill="none" stroke="rgba(220,220,220,0.18)" stroke-width="0.6" transform="rotate(35 152.5 14.5)"/><ellipse cx="158.0" cy="15" rx="3.4" ry="5.8" fill="none" stroke="rgba(25,25,25,0.28)" stroke-width="0.7" transform="rotate(35 158.0 15)"/><ellipse cx="159.0" cy="14.5" rx="3.4" ry="5.8" fill="none" stroke="rgba(220,220,220,0.18)" stroke-width="0.6" transform="rotate(35 159.0 14.5)"/><ellipse cx="164.5" cy="15" rx="3.4" ry="5.8" fill="none" stroke="rgba(25,25,25,0.28)" stroke-width="0.7" transform="rotate(35 164.5 15)"/><ellipse cx="165.5" cy="14.5" rx="3.4" ry="5.8" fill="none" stroke="rgba(220,220,220,0.18)" stroke-width="0.6" transform="rotate(35 165.5 14.5)"/><ellipse cx="171.0" cy="15" rx="3.4" ry="5.8" fill="none" stroke="rgba(25,25,25,0.28)" stroke-width="0.7" transform="rotate(35 171.0 15)"/><ellipse cx="172.0" cy="14.5" rx="3.4" ry="5.8" fill="none" stroke="rgba(220,220,220,0.18)" stroke-width="0.6" transform="rotate(35 172.0 14.5)"/><ellipse cx="177.5" cy="15" rx="3.4" ry="5.8" fill="none" stroke="rgba(25,25,25,0.28)" stroke-width="0.7" transform="rotate(35 177.5 15)"/><ellipse cx="178.5" cy="14.5" rx="3.4" ry="5.8" fill="none" stroke="rgba(220,220,220,0.18)" stroke-width="0.6" transform="rotate(35 178.5 14.5)"/><ellipse cx="184.0" cy="15" rx="3.4" ry="5.8" fill="none" stroke="rgba(25,25,25,0.28)" stroke-width="0.7" transform="rotate(35 184.0 15)"/><ellipse cx="185.0" cy="14.5" rx="3.4" ry="5.8" fill="none" stroke="rgba(220,220,220,0.18)" stroke-width="0.6" transform="rotate(35 185.0 14.5)"/><path d="M1 3.5H9" stroke="rgba(60,160,80,0.5)" stroke-width="0.8"/><path d="M1 6H8" stroke="rgba(200,60,140,0.45)" stroke-width="0.8"/><path d="M1 10.5H10" stroke="rgba(220,70,70,0.45)" stroke-width="0.8"/><path d="M0 21.2H183" stroke="rgba(30,30,30,0.45)" stroke-width="0.8"/></svg>
<div class="a" style="left:187.5px;top:173.6px;width:10.5px;height:2.8px;background:#d42828;border-radius:0 1px 1px 0"></div>
<div class="yl r" style="right:413.50px;top:45.10px;font-size:8.5px;">10</div>
<div class="a" style="left:185.0px;top:49.5px;width:2.5px;height:1px;background:#333"></div>
<div class="yl r" style="right:413.50px;top:81.70px;font-size:8.5px;">8</div>
<div class="a" style="left:185.0px;top:86.1px;width:2.5px;height:1px;background:#333"></div>
<div class="yl r" style="right:413.50px;top:118.30px;font-size:8.5px;">6</div>
<div class="a" style="left:185.0px;top:122.7px;width:2.5px;height:1px;background:#333"></div>
<div class="yl r" style="right:413.50px;top:154.90px;font-size:8.5px;">4</div>
<div class="a" style="left:185.0px;top:159.3px;width:2.5px;height:1px;background:#333"></div>
<div class="yl r" style="right:413.50px;top:191.50px;font-size:8.5px;">2</div>
<div class="a" style="left:185.0px;top:195.9px;width:2.5px;height:1px;background:#333"></div>
<div class="yl r" style="right:413.50px;top:228.10px;font-size:8.5px;">0</div>
<div class="a" style="left:185.0px;top:232.5px;width:2.5px;height:1px;background:#333"></div>
<div class="yl" style="left:164.80px;top:121.94px;font-size:7.4px;">µm</div>
<svg class="a" style="left:159px;top:28px" width="218" height="263" viewBox="159 28 218 263"><path d="M187.5 237.5 V279" fill="none" stroke="#333" stroke-width="1"/><path d="M187.5 279 H370.5 V238.0" fill="none" stroke="#7a7a7a" stroke-width="1.3"/><path d="M183.5 243 H187.5" stroke="#444" stroke-width="1"/><path d="M183.5 258 H187.5" stroke="#444" stroke-width="1"/><path d="M183.5 273 H187.5" stroke="#444" stroke-width="1"/><path d="M187.5 279 V281" stroke="#555" stroke-width="1"/><path d="M224.1 279 V281" stroke="#555" stroke-width="1"/><path d="M260.7 279 V281" stroke="#555" stroke-width="1"/><path d="M297.3 279 V281" stroke="#555" stroke-width="1"/><path d="M333.9 279 V281" stroke="#555" stroke-width="1"/><path d="M370.5 279 V281" stroke="#555" stroke-width="1"/><path d="M188.2 278.5 C188.6 278.4 189.7 279.1 190.5 277.7 C191.3 276.2 192.1 272.0 192.9 269.8 C193.7 267.6 194.4 265.4 195.3 264.3 C196.2 263.2 197.6 263.1 198.5 263.5 C199.4 263.9 200.2 265.5 200.8 266.7 C201.5 267.9 201.6 269.9 202.4 270.6 C203.2 271.3 204.6 271.1 205.6 271.1 C206.6 271.1 207.6 271.9 208.7 270.6 C209.8 269.3 210.8 265.7 211.9 263.5 C213.0 261.3 214.2 258.6 215.1 257.2 C216.0 255.8 216.7 255.3 217.5 255.3 C218.3 255.3 219.0 255.4 219.8 257.2 C220.6 259.0 221.3 264.3 222.2 265.9 C223.1 267.5 224.3 266.4 225.4 266.7 C226.5 267.0 227.6 267.2 228.5 267.5 C229.4 267.8 230.1 269.0 230.9 268.6 C231.7 268.2 232.5 265.7 233.3 265.1 C234.1 264.5 234.9 263.9 235.7 265.1 C236.5 266.3 237.2 270.8 238.0 272.2 C238.8 273.6 239.5 273.7 240.4 273.8 C241.3 273.9 242.6 274.4 243.6 273.0 C244.6 271.6 245.6 267.4 246.7 265.1 C247.8 262.9 248.8 260.7 249.9 259.5 C251.0 258.3 252.1 257.6 253.1 258.0 C254.1 258.4 255.3 259.7 256.2 261.9 C257.1 264.1 257.9 269.7 258.6 271.4 C259.3 273.1 259.5 273.2 260.2 272.2 C260.9 271.1 261.7 267.6 262.6 265.1 C263.5 262.6 264.6 259.1 265.7 257.2 C266.8 255.3 268.0 254.1 268.9 254.0 C269.8 253.9 270.5 254.0 271.3 256.4 C272.1 258.8 272.9 267.1 273.7 268.2 C274.5 269.2 274.9 264.5 276.0 262.7 C277.1 260.9 278.9 258.1 280.0 257.5 C281.1 256.9 281.5 257.2 282.5 259.2 C283.5 261.1 284.7 268.8 285.8 269.2 C286.9 269.6 287.9 263.6 289.2 261.7 C290.4 259.8 292.1 258.1 293.3 257.5 C294.6 256.9 295.4 258.7 296.7 258.3 C297.9 257.9 299.6 254.2 300.8 255.0 C302.1 255.8 302.9 263.6 304.2 263.3 C305.4 263.0 306.8 256.4 308.3 253.3 C309.8 250.2 312.1 246.1 313.3 245.0 C314.6 243.9 314.8 243.4 315.8 246.7 C316.8 250.0 317.9 263.6 319.2 265.0 C320.4 266.4 321.4 259.4 323.3 255.0 C325.2 250.6 328.9 240.0 330.8 238.3 C332.8 236.6 333.6 241.9 335.0 245.0 C336.4 248.1 337.8 254.5 339.2 256.7 C340.6 258.9 342.1 259.4 343.3 258.3 C344.6 257.2 345.3 251.9 346.7 250.0 C348.1 248.1 349.9 245.2 351.7 246.7 C353.5 248.2 355.8 258.1 357.5 259.2 C359.2 260.3 360.0 256.2 361.7 253.3 C363.4 250.4 366.1 242.7 367.5 241.7 C368.9 240.7 369.6 246.5 370.0 247.5" fill="none" stroke="#f0b8dc" stroke-width="1.4" opacity="0.7" transform="translate(0.8,0.5)"/><path d="M188.2 278.5 C188.6 278.4 189.7 279.1 190.5 277.7 C191.3 276.2 192.1 272.0 192.9 269.8 C193.7 267.6 194.4 265.4 195.3 264.3 C196.2 263.2 197.6 263.1 198.5 263.5 C199.4 263.9 200.2 265.5 200.8 266.7 C201.5 267.9 201.6 269.9 202.4 270.6 C203.2 271.3 204.6 271.1 205.6 271.1 C206.6 271.1 207.6 271.9 208.7 270.6 C209.8 269.3 210.8 265.7 211.9 263.5 C213.0 261.3 214.2 258.6 215.1 257.2 C216.0 255.8 216.7 255.3 217.5 255.3 C218.3 255.3 219.0 255.4 219.8 257.2 C220.6 259.0 221.3 264.3 222.2 265.9 C223.1 267.5 224.3 266.4 225.4 266.7 C226.5 267.0 227.6 267.2 228.5 267.5 C229.4 267.8 230.1 269.0 230.9 268.6 C231.7 268.2 232.5 265.7 233.3 265.1 C234.1 264.5 234.9 263.9 235.7 265.1 C236.5 266.3 237.2 270.8 238.0 272.2 C238.8 273.6 239.5 273.7 240.4 273.8 C241.3 273.9 242.6 274.4 243.6 273.0 C244.6 271.6 245.6 267.4 246.7 265.1 C247.8 262.9 248.8 260.7 249.9 259.5 C251.0 258.3 252.1 257.6 253.1 258.0 C254.1 258.4 255.3 259.7 256.2 261.9 C257.1 264.1 257.9 269.7 258.6 271.4 C259.3 273.1 259.5 273.2 260.2 272.2 C260.9 271.1 261.7 267.6 262.6 265.1 C263.5 262.6 264.6 259.1 265.7 257.2 C266.8 255.3 268.0 254.1 268.9 254.0 C269.8 253.9 270.5 254.0 271.3 256.4 C272.1 258.8 272.9 267.1 273.7 268.2 C274.5 269.2 274.9 264.5 276.0 262.7 C277.1 260.9 278.9 258.1 280.0 257.5 C281.1 256.9 281.5 257.2 282.5 259.2 C283.5 261.1 284.7 268.8 285.8 269.2 C286.9 269.6 287.9 263.6 289.2 261.7 C290.4 259.8 292.1 258.1 293.3 257.5 C294.6 256.9 295.4 258.7 296.7 258.3 C297.9 257.9 299.6 254.2 300.8 255.0 C302.1 255.8 302.9 263.6 304.2 263.3 C305.4 263.0 306.8 256.4 308.3 253.3 C309.8 250.2 312.1 246.1 313.3 245.0 C314.6 243.9 314.8 243.4 315.8 246.7 C316.8 250.0 317.9 263.6 319.2 265.0 C320.4 266.4 321.4 259.4 323.3 255.0 C325.2 250.6 328.9 240.0 330.8 238.3 C332.8 236.6 333.6 241.9 335.0 245.0 C336.4 248.1 337.8 254.5 339.2 256.7 C340.6 258.9 342.1 259.4 343.3 258.3 C344.6 257.2 345.3 251.9 346.7 250.0 C348.1 248.1 349.9 245.2 351.7 246.7 C353.5 248.2 355.8 258.1 357.5 259.2 C359.2 260.3 360.0 256.2 361.7 253.3 C363.4 250.4 366.1 242.7 367.5 241.7 C368.9 240.7 369.6 246.5 370.0 247.5" fill="none" stroke="#704e70" stroke-width="1.2"/></svg>
<div class="yl r" style="right:418.00px;top:239.10px;font-size:8.5px;">800</div>
<div class="yl r" style="right:418.00px;top:254.10px;font-size:8.5px;">600</div>
<div class="yl r" style="right:418.00px;top:269.10px;font-size:8.5px;">400</div>
<div class="yl" style="left:176.8px;width:20px;text-align:center;top:280.10px;font-size:8.5px">0</div>
<div class="yl" style="left:213.4px;width:20px;text-align:center;top:280.10px;font-size:8.5px">2</div>
<div class="yl" style="left:250.0px;width:20px;text-align:center;top:280.10px;font-size:8.5px">4</div>
<div class="yl" style="left:286.6px;width:20px;text-align:center;top:280.10px;font-size:8.5px">6</div>
<div class="yl" style="left:323.2px;width:20px;text-align:center;top:280.10px;font-size:8.5px">8</div>
<div class="yl" style="left:359.8px;width:20px;text-align:center;top:280.10px;font-size:8.5px">10</div>
<div class="yl" style="left:288.70px;top:280.74px;font-size:7.4px;">µm</div>
<div class="yl" style="left:191.7px;top:262.0px;transform:rotate(-90deg);transform-origin:0 0;font-size:6.4px;color:#333">10<span style="font-size:5px;position:relative;top:-3.4px">3</span></div>
<div class="gw" style="left:379px;top:28px;height:263px"></div>
<div class="a" style="left:379px;top:28px;width:218px;height:17px;border-radius:5px 5px 0 0;background:linear-gradient(#9cb4f0,#84a0e8 14%,#7494e0 32%,#7090df 68%,#7698e4)"></div>
<div class="a" style="left:381px;top:44.5px;width:214px;height:244.5px;background:#fff"></div>
<svg class="a" style="left:382.6px;top:31.5px" width="9" height="9.5"><rect x="0" y="0" width="9" height="9" fill="#e6cdea"/><path d="M1.2 2.2C2.6 1.8 3.4 4 4.2 5.6C5 7 6.2 6.2 7 6.6C8 7 8.6 7.6 9 8.6H1.2Z" fill="#e0506e"/><path d="M2 5.5C2.6 6.5 3.6 7.2 3.6 8.6H1.2V5Z" fill="#f2e0f0" opacity="0.6"/><path d="M0.6 0V9H9" stroke="#3a2a40" stroke-width="1.1" fill="none"/></svg>
<div class="gt" style="left:392.90px;top:33.34px;font-size:7.4px;transform:scaleX(0.998);transform-origin:0 0">HeightRetrace</div>
<div class="gt" style="left:444.50px;top:33.64px;font-size:7.4px;font-weight:normal">|</div>
<div class="gt" style="left:450.10px;top:33.34px;font-size:7.4px;transform:scaleX(1.155);transform-origin:0 0">00:02:57</div>
<div class="gb" style="left:557px;top:32px;width:10.6px;height:10.4px;border:0.8px solid #98aeea;background:linear-gradient(135deg,#84a6f4,#5079e4 50%,#4068d8)"></div>
<div class="a" style="left:559.6px;top:38.6px;width:3.6px;height:2px;background:#fff"></div>
<div class="gb" style="left:570px;top:32px;width:10.6px;height:10.4px;border:0.8px solid #98aeea;background:linear-gradient(135deg,#84a6f4,#5079e4 50%,#4068d8)"></div>
<div class="a" style="left:572px;top:34px;width:6.8px;height:6.4px;border:0.8px solid #f4f8ff;border-top-width:1.8px"></div>
<div class="gb" style="left:582.2px;top:32px;width:10.6px;height:10.4px;border:0.8px solid #98aeea;background:linear-gradient(135deg,#e4a0b0,#c87080 50%,#b86474)"></div>
<svg class="a" style="left:582.2px;top:32px" width="11" height="11"><path d="M2.8 2.8L7.8 7.8M7.8 2.8L2.8 7.8" stroke="#fff" stroke-width="1.3"/></svg>
<div class="a" style="left:407.0px;top:49.5px;width:184px;height:184px;background:#333"></div>
<div class="a" style="left:407.5px;top:50px;width:183px;height:126px;background:#5f5f5f"></div>
<svg class="a" style="left:407.5px;top:176px" width="183" height="57" viewBox="0 0 183 57"><defs><filter id="rb" x="-20%" y="-20%" width="140%" height="140%"><feGaussianBlur stdDeviation="1.3"/></filter></defs><rect x="0" y="0" width="183" height="57" fill="#2c2c2c"/><g filter="url(#rb)"><path d="M-71.3 -1.6L-11.4 69.8" stroke="rgb(133,133,133)" stroke-width="10.5" stroke-linecap="round"/><path d="M-72.8 -0.8L-12.9 70.6" stroke="rgb(215,215,215)" stroke-width="5.5" stroke-linecap="round"/><path d="M-55.0 -1.2L-3.9 59.7" stroke="rgb(133,133,133)" stroke-width="10.5" stroke-linecap="round"/><path d="M-56.5 -0.4L-5.4 60.5" stroke="rgb(215,215,215)" stroke-width="5.5" stroke-linecap="round"/><path d="M-38.7 -1.2L27.9 78.1" stroke="rgb(74,74,74)" stroke-width="10.5" stroke-linecap="round"/><path d="M-40.2 -0.4L26.4 78.9" stroke="rgb(120,120,120)" stroke-width="5.5" stroke-linecap="round"/><path d="M-25.3 -4.5L7.8 35.0" stroke="rgb(86,86,86)" stroke-width="10.5" stroke-linecap="round"/><path d="M-26.8 -3.7L6.3 35.8" stroke="rgb(140,140,140)" stroke-width="5.5" stroke-linecap="round"/><path d="M7.9 35.1L45.9 80.3" stroke="rgb(96,96,96)" stroke-width="10.5" stroke-linecap="round"/><path d="M6.4 35.9L44.4 81.1" stroke="rgb(155,155,155)" stroke-width="5.5" stroke-linecap="round"/><path d="M-9.1 -4.4L51.6 68.0" stroke="rgb(74,74,74)" stroke-width="10.5" stroke-linecap="round"/><path d="M-10.6 -3.6L50.1 68.8" stroke="rgb(120,120,120)" stroke-width="5.5" stroke-linecap="round"/><path d="M3.5 -7.6L32.5 26.9" stroke="rgb(133,133,133)" stroke-width="10.5" stroke-linecap="round"/><path d="M2.0 -6.8L31.0 27.7" stroke="rgb(215,215,215)" stroke-width="5.5" stroke-linecap="round"/><path d="M32.5 26.9L93.8 99.9" stroke="rgb(86,86,86)" stroke-width="10.5" stroke-linecap="round"/><path d="M31.0 27.7L92.3 100.7" stroke="rgb(140,140,140)" stroke-width="5.5" stroke-linecap="round"/><path d="M26.5 2.6L77.9 63.9" stroke="rgb(124,124,124)" stroke-width="10.5" stroke-linecap="round"/><path d="M25.0 3.4L76.4 64.7" stroke="rgb(200,200,200)" stroke-width="5.5" stroke-linecap="round"/><path d="M40.6 2.7L77.7 47.0" stroke="rgb(105,105,105)" stroke-width="10.5" stroke-linecap="round"/><path d="M39.1 3.5L76.2 47.8" stroke="rgb(170,170,170)" stroke-width="5.5" stroke-linecap="round"/><path d="M78.7 48.1L122.7 100.6" stroke="rgb(86,86,86)" stroke-width="10.5" stroke-linecap="round"/><path d="M77.2 48.9L121.2 101.4" stroke="rgb(140,140,140)" stroke-width="5.5" stroke-linecap="round"/><path d="M48.3 -5.1L111.4 70.0" stroke="rgb(114,114,114)" stroke-width="10.5" stroke-linecap="round"/><path d="M46.8 -4.3L109.9 70.8" stroke="rgb(185,185,185)" stroke-width="5.5" stroke-linecap="round"/><path d="M63.9 -5.1L105.8 44.9" stroke="rgb(133,133,133)" stroke-width="10.5" stroke-linecap="round"/><path d="M62.4 -4.3L104.3 45.7" stroke="rgb(215,215,215)" stroke-width="5.5" stroke-linecap="round"/><path d="M106.8 46.0L164.8 115.2" stroke="rgb(86,86,86)" stroke-width="10.5" stroke-linecap="round"/><path d="M105.3 46.8L163.3 116.0" stroke="rgb(140,140,140)" stroke-width="5.5" stroke-linecap="round"/><path d="M76.6 -8.5L146.3 74.5" stroke="rgb(74,74,74)" stroke-width="10.5" stroke-linecap="round"/><path d="M75.1 -7.7L144.8 75.3" stroke="rgb(120,120,120)" stroke-width="5.5" stroke-linecap="round"/><path d="M94.8 -4.2L146.7 57.6" stroke="rgb(105,105,105)" stroke-width="10.5" stroke-linecap="round"/><path d="M93.3 -3.4L145.2 58.4" stroke="rgb(170,170,170)" stroke-width="5.5" stroke-linecap="round"/><path d="M147.8 59.0L200.9 122.3" stroke="rgb(74,74,74)" stroke-width="10.5" stroke-linecap="round"/><path d="M146.3 59.8L199.4 123.1" stroke="rgb(120,120,120)" stroke-width="5.5" stroke-linecap="round"/><path d="M112.7 -1.5L181.5 80.4" stroke="rgb(74,74,74)" stroke-width="10.5" stroke-linecap="round"/><path d="M111.2 -0.7L180.0 81.2" stroke="rgb(120,120,120)" stroke-width="5.5" stroke-linecap="round"/><path d="M132.2 2.4L175.5 54.0" stroke="rgb(96,96,96)" stroke-width="10.5" stroke-linecap="round"/><path d="M130.7 3.2L174.0 54.8" stroke="rgb(155,155,155)" stroke-width="5.5" stroke-linecap="round"/><path d="M178.4 57.4L217.8 104.4" stroke="rgb(105,105,105)" stroke-width="10.5" stroke-linecap="round"/><path d="M176.9 58.2L216.3 105.2" stroke="rgb(170,170,170)" stroke-width="5.5" stroke-linecap="round"/><path d="M146.5 0.6L211.3 77.9" stroke="rgb(74,74,74)" stroke-width="10.5" stroke-linecap="round"/><path d="M145.0 1.4L209.8 78.7" stroke="rgb(120,120,120)" stroke-width="5.5" stroke-linecap="round"/><path d="M156.9 -6.6L207.2 53.4" stroke="rgb(96,96,96)" stroke-width="10.5" stroke-linecap="round"/><path d="M155.4 -5.8L205.7 54.2" stroke="rgb(155,155,155)" stroke-width="5.5" stroke-linecap="round"/><path d="M210.2 56.9L253.3 108.3" stroke="rgb(124,124,124)" stroke-width="10.5" stroke-linecap="round"/><path d="M208.7 57.7L251.8 109.1" stroke="rgb(200,200,200)" stroke-width="5.5" stroke-linecap="round"/><path d="M172.4 -5.3L208.8 38.0" stroke="rgb(74,74,74)" stroke-width="10.5" stroke-linecap="round"/><path d="M170.9 -4.5L207.3 38.8" stroke="rgb(120,120,120)" stroke-width="5.5" stroke-linecap="round"/><path d="M210.8 40.4L269.8 110.8" stroke="rgb(96,96,96)" stroke-width="10.5" stroke-linecap="round"/><path d="M209.3 41.2L268.3 111.6" stroke="rgb(155,155,155)" stroke-width="5.5" stroke-linecap="round"/></g><rect x="0" y="8" width="183" height="13" fill="rgba(90,90,90,0.22)"/><ellipse cx="2.0" cy="15" rx="3.4" ry="5.8" fill="none" stroke="rgba(25,25,25,0.28)" stroke-width="0.7" transform="rotate(35 2.0 15)"/><ellipse cx="3.0" cy="14.5" rx="3.4" ry="5.8" fill="none" stroke="rgba(220,220,220,0.18)" stroke-width="0.6" transform="rotate(35 3.0 14.5)"/><ellipse cx="8.5" cy="15" rx="3.4" ry="5.8" fill="none" stroke="rgba(25,25,25,0.28)" stroke-width="0.7" transform="rotate(35 8.5 15)"/><ellipse cx="9.5" cy="14.5" rx="3.4" ry="5.8" fill="none" stroke="rgba(220,220,220,0.18)" stroke-width="0.6" transform="rotate(35 9.5 14.5)"/><ellipse cx="15.0" cy="15" rx="3.4" ry="5.8" fill="none" stroke="rgba(25,25,25,0.28)" stroke-width="0.7" transform="rotate(35 15.0 15)"/><ellipse cx="16.0" cy="14.5" rx="3.4" ry="5.8" fill="none" stroke="rgba(220,220,220,0.18)" stroke-width="0.6" transform="rotate(35 16.0 14.5)"/><ellipse cx="21.5" cy="15" rx="3.4" ry="5.8" fill="none" stroke="rgba(25,25,25,0.28)" stroke-width="0.7" transform="rotate(35 21.5 15)"/><ellipse cx="22.5" cy="14.5" rx="3.4" ry="5.8" fill="none" stroke="rgba(220,220,220,0.18)" stroke-width="0.6" transform="rotate(35 22.5 14.5)"/><ellipse cx="28.0" cy="15" rx="3.4" ry="5.8" fill="none" stroke="rgba(25,25,25,0.28)" stroke-width="0.7" transform="rotate(35 28.0 15)"/><ellipse cx="29.0" cy="14.5" rx="3.4" ry="5.8" fill="none" stroke="rgba(220,220,220,0.18)" stroke-width="0.6" transform="rotate(35 29.0 14.5)"/><ellipse cx="34.5" cy="15" rx="3.4" ry="5.8" fill="none" stroke="rgba(25,25,25,0.28)" stroke-width="0.7" transform="rotate(35 34.5 15)"/><ellipse cx="35.5" cy="14.5" rx="3.4" ry="5.8" fill="none" stroke="rgba(220,220,220,0.18)" stroke-width="0.6" transform="rotate(35 35.5 14.5)"/><ellipse cx="41.0" cy="15" rx="3.4" ry="5.8" fill="none" stroke="rgba(25,25,25,0.28)" stroke-width="0.7" transform="rotate(35 41.0 15)"/><ellipse cx="42.0" cy="14.5" rx="3.4" ry="5.8" fill="none" stroke="rgba(220,220,220,0.18)" stroke-width="0.6" transform="rotate(35 42.0 14.5)"/><ellipse cx="47.5" cy="15" rx="3.4" ry="5.8" fill="none" stroke="rgba(25,25,25,0.28)" stroke-width="0.7" transform="rotate(35 47.5 15)"/><ellipse cx="48.5" cy="14.5" rx="3.4" ry="5.8" fill="none" stroke="rgba(220,220,220,0.18)" stroke-width="0.6" transform="rotate(35 48.5 14.5)"/><ellipse cx="54.0" cy="15" rx="3.4" ry="5.8" fill="none" stroke="rgba(25,25,25,0.28)" stroke-width="0.7" transform="rotate(35 54.0 15)"/><ellipse cx="55.0" cy="14.5" rx="3.4" ry="5.8" fill="none" stroke="rgba(220,220,220,0.18)" stroke-width="0.6" transform="rotate(35 55.0 14.5)"/><ellipse cx="60.5" cy="15" rx="3.4" ry="5.8" fill="none" stroke="rgba(25,25,25,0.28)" stroke-width="0.7" transform="rotate(35 60.5 15)"/><ellipse cx="61.5" cy="14.5" rx="3.4" ry="5.8" fill="none" stroke="rgba(220,220,220,0.18)" stroke-width="0.6" transform="rotate(35 61.5 14.5)"/><ellipse cx="67.0" cy="15" rx="3.4" ry="5.8" fill="none" stroke="rgba(25,25,25,0.28)" stroke-width="0.7" transform="rotate(35 67.0 15)"/><ellipse cx="68.0" cy="14.5" rx="3.4" ry="5.8" fill="none" stroke="rgba(220,220,220,0.18)" stroke-width="0.6" transform="rotate(35 68.0 14.5)"/><ellipse cx="73.5" cy="15" rx="3.4" ry="5.8" fill="none" stroke="rgba(25,25,25,0.28)" stroke-width="0.7" transform="rotate(35 73.5 15)"/><ellipse cx="74.5" cy="14.5" rx="3.4" ry="5.8" fill="none" stroke="rgba(220,220,220,0.18)" stroke-width="0.6" transform="rotate(35 74.5 14.5)"/><ellipse cx="80.0" cy="15" rx="3.4" ry="5.8" fill="none" stroke="rgba(25,25,25,0.28)" stroke-width="0.7" transform="rotate(35 80.0 15)"/><ellipse cx="81.0" cy="14.5" rx="3.4" ry="5.8" fill="none" stroke="rgba(220,220,220,0.18)" stroke-width="0.6" transform="rotate(35 81.0 14.5)"/><ellipse cx="86.5" cy="15" rx="3.4" ry="5.8" fill="none" stroke="rgba(25,25,25,0.28)" stroke-width="0.7" transform="rotate(35 86.5 15)"/><ellipse cx="87.5" cy="14.5" rx="3.4" ry="5.8" fill="none" stroke="rgba(220,220,220,0.18)" stroke-width="0.6" transform="rotate(35 87.5 14.5)"/><ellipse cx="93.0" cy="15" rx="3.4" ry="5.8" fill="none" stroke="rgba(25,25,25,0.28)" stroke-width="0.7" transform="rotate(35 93.0 15)"/><ellipse cx="94.0" cy="14.5" rx="3.4" ry="5.8" fill="none" stroke="rgba(220,220,220,0.18)" stroke-width="0.6" transform="rotate(35 94.0 14.5)"/><ellipse cx="99.5" cy="15" rx="3.4" ry="5.8" fill="none" stroke="rgba(25,25,25,0.28)" stroke-width="0.7" transform="rotate(35 99.5 15)"/><ellipse cx="100.5" cy="14.5" rx="3.4" ry="5.8" fill="none" stroke="rgba(220,220,220,0.18)" stroke-width="0.6" transform="rotate(35 100.5 14.5)"/><ellipse cx="106.0" cy="15" rx="3.4" ry="5.8" fill="none" stroke="rgba(25,25,25,0.28)" stroke-width="0.7" transform="rotate(35 106.0 15)"/><ellipse cx="107.0" cy="14.5" rx="3.4" ry="5.8" fill="none" stroke="rgba(220,220,220,0.18)" stroke-width="0.6" transform="rotate(35 107.0 14.5)"/><ellipse cx="112.5" cy="15" rx="3.4" ry="5.8" fill="none" stroke="rgba(25,25,25,0.28)" stroke-width="0.7" transform="rotate(35 112.5 15)"/><ellipse cx="113.5" cy="14.5" rx="3.4" ry="5.8" fill="none" stroke="rgba(220,220,220,0.18)" stroke-width="0.6" transform="rotate(35 113.5 14.5)"/><ellipse cx="119.0" cy="15" rx="3.4" ry="5.8" fill="none" stroke="rgba(25,25,25,0.28)" stroke-width="0.7" transform="rotate(35 119.0 15)"/><ellipse cx="120.0" cy="14.5" rx="3.4" ry="5.8" fill="none" stroke="rgba(220,220,220,0.18)" stroke-width="0.6" transform="rotate(35 120.0 14.5)"/><ellipse cx="125.5" cy="15" rx="3.4" ry="5.8" fill="none" stroke="rgba(25,25,25,0.28)" stroke-width="0.7" transform="rotate(35 125.5 15)"/><ellipse cx="126.5" cy="14.5" rx="3.4" ry="5.8" fill="none" stroke="rgba(220,220,220,0.18)" stroke-width="0.6" transform="rotate(35 126.5 14.5)"/><ellipse cx="132.0" cy="15" rx="3.4" ry="5.8" fill="none" stroke="rgba(25,25,25,0.28)" stroke-width="0.7" transform="rotate(35 132.0 15)"/><ellipse cx="133.0" cy="14.5" rx="3.4" ry="5.8" fill="none" stroke="rgba(220,220,220,0.18)" stroke-width="0.6" transform="rotate(35 133.0 14.5)"/><ellipse cx="138.5" cy="15" rx="3.4" ry="5.8" fill="none" stroke="rgba(25,25,25,0.28)" stroke-width="0.7" transform="rotate(35 138.5 15)"/><ellipse cx="139.5" cy="14.5" rx="3.4" ry="5.8" fill="none" stroke="rgba(220,220,220,0.18)" stroke-width="0.6" transform="rotate(35 139.5 14.5)"/><ellipse cx="145.0" cy="15" rx="3.4" ry="5.8" fill="none" stroke="rgba(25,25,25,0.28)" stroke-width="0.7" transform="rotate(35 145.0 15)"/><ellipse cx="146.0" cy="14.5" rx="3.4" ry="5.8" fill="none" stroke="rgba(220,220,220,0.18)" stroke-width="0.6" transform="rotate(35 146.0 14.5)"/><ellipse cx="151.5" cy="15" rx="3.4" ry="5.8" fill="none" stroke="rgba(25,25,25,0.28)" stroke-width="0.7" transform="rotate(35 151.5 15)"/><ellipse cx="152.5" cy="14.5" rx="3.4" ry="5.8" fill="none" stroke="rgba(220,220,220,0.18)" stroke-width="0.6" transform="rotate(35 152.5 14.5)"/><ellipse cx="158.0" cy="15" rx="3.4" ry="5.8" fill="none" stroke="rgba(25,25,25,0.28)" stroke-width="0.7" transform="rotate(35 158.0 15)"/><ellipse cx="159.0" cy="14.5" rx="3.4" ry="5.8" fill="none" stroke="rgba(220,220,220,0.18)" stroke-width="0.6" transform="rotate(35 159.0 14.5)"/><ellipse cx="164.5" cy="15" rx="3.4" ry="5.8" fill="none" stroke="rgba(25,25,25,0.28)" stroke-width="0.7" transform="rotate(35 164.5 15)"/><ellipse cx="165.5" cy="14.5" rx="3.4" ry="5.8" fill="none" stroke="rgba(220,220,220,0.18)" stroke-width="0.6" transform="rotate(35 165.5 14.5)"/><ellipse cx="171.0" cy="15" rx="3.4" ry="5.8" fill="none" stroke="rgba(25,25,25,0.28)" stroke-width="0.7" transform="rotate(35 171.0 15)"/><ellipse cx="172.0" cy="14.5" rx="3.4" ry="5.8" fill="none" stroke="rgba(220,220,220,0.18)" stroke-width="0.6" transform="rotate(35 172.0 14.5)"/><ellipse cx="177.5" cy="15" rx="3.4" ry="5.8" fill="none" stroke="rgba(25,25,25,0.28)" stroke-width="0.7" transform="rotate(35 177.5 15)"/><ellipse cx="178.5" cy="14.5" rx="3.4" ry="5.8" fill="none" stroke="rgba(220,220,220,0.18)" stroke-width="0.6" transform="rotate(35 178.5 14.5)"/><ellipse cx="184.0" cy="15" rx="3.4" ry="5.8" fill="none" stroke="rgba(25,25,25,0.28)" stroke-width="0.7" transform="rotate(35 184.0 15)"/><ellipse cx="185.0" cy="14.5" rx="3.4" ry="5.8" fill="none" stroke="rgba(220,220,220,0.18)" stroke-width="0.6" transform="rotate(35 185.0 14.5)"/><path d="M1 3.5H9" stroke="rgba(60,160,80,0.5)" stroke-width="0.8"/><path d="M1 6H8" stroke="rgba(200,60,140,0.45)" stroke-width="0.8"/><path d="M1 10.5H10" stroke="rgba(220,70,70,0.45)" stroke-width="0.8"/><path d="M0 21.2H183" stroke="rgba(30,30,30,0.45)" stroke-width="0.8"/></svg>
<div class="a" style="left:407.5px;top:173.6px;width:10.5px;height:2.8px;background:#d42828;border-radius:0 1px 1px 0"></div>
<div class="yl r" style="right:193.50px;top:45.10px;font-size:8.5px;">10</div>
<div class="a" style="left:405.0px;top:49.5px;width:2.5px;height:1px;background:#333"></div>
<div class="yl r" style="right:193.50px;top:81.70px;font-size:8.5px;">8</div>
<div class="a" style="left:405.0px;top:86.1px;width:2.5px;height:1px;background:#333"></div>
<div class="yl r" style="right:193.50px;top:118.30px;font-size:8.5px;">6</div>
<div class="a" style="left:405.0px;top:122.7px;width:2.5px;height:1px;background:#333"></div>
<div class="yl r" style="right:193.50px;top:154.90px;font-size:8.5px;">4</div>
<div class="a" style="left:405.0px;top:159.3px;width:2.5px;height:1px;background:#333"></div>
<div class="yl r" style="right:193.50px;top:191.50px;font-size:8.5px;">2</div>
<div class="a" style="left:405.0px;top:195.9px;width:2.5px;height:1px;background:#333"></div>
<div class="yl r" style="right:193.50px;top:228.10px;font-size:8.5px;">0</div>
<div class="a" style="left:405.0px;top:232.5px;width:2.5px;height:1px;background:#333"></div>
<div class="yl" style="left:384.80px;top:121.94px;font-size:7.4px;">µm</div>
<svg class="a" style="left:379px;top:28px" width="218" height="263" viewBox="379 28 218 263"><path d="M407.5 237.5 V279" fill="none" stroke="#333" stroke-width="1"/><path d="M407.5 279 H590.5 V238.0" fill="none" stroke="#7a7a7a" stroke-width="1.3"/><path d="M403.5 243 H407.5" stroke="#444" stroke-width="1"/><path d="M403.5 258 H407.5" stroke="#444" stroke-width="1"/><path d="M403.5 273 H407.5" stroke="#444" stroke-width="1"/><path d="M407.5 279 V281" stroke="#555" stroke-width="1"/><path d="M444.1 279 V281" stroke="#555" stroke-width="1"/><path d="M480.7 279 V281" stroke="#555" stroke-width="1"/><path d="M517.3 279 V281" stroke="#555" stroke-width="1"/><path d="M553.9 279 V281" stroke="#555" stroke-width="1"/><path d="M590.5 279 V281" stroke="#555" stroke-width="1"/><path d="M408.2 278.5 C408.6 278.4 409.7 279.1 410.5 277.7 C411.3 276.2 412.1 272.0 412.9 269.8 C413.7 267.6 414.4 265.4 415.3 264.3 C416.2 263.2 417.6 263.1 418.5 263.5 C419.4 263.9 420.2 265.5 420.8 266.7 C421.4 267.9 421.6 269.9 422.4 270.6 C423.2 271.3 424.6 271.1 425.6 271.1 C426.7 271.1 427.6 271.9 428.7 270.6 C429.8 269.3 430.8 265.7 431.9 263.5 C433.0 261.3 434.2 258.6 435.1 257.2 C436.0 255.8 436.7 255.3 437.5 255.3 C438.3 255.3 439.0 255.4 439.8 257.2 C440.6 259.0 441.3 264.3 442.2 265.9 C443.1 267.5 444.3 266.4 445.4 266.7 C446.4 267.0 447.6 267.2 448.5 267.5 C449.4 267.8 450.1 269.0 450.9 268.6 C451.7 268.2 452.5 265.7 453.3 265.1 C454.1 264.5 454.9 263.9 455.7 265.1 C456.5 266.3 457.2 270.8 458.0 272.2 C458.8 273.6 459.5 273.7 460.4 273.8 C461.3 273.9 462.6 274.4 463.6 273.0 C464.7 271.6 465.6 267.4 466.7 265.1 C467.8 262.9 468.8 260.7 469.9 259.5 C471.0 258.3 472.1 257.6 473.1 258.0 C474.2 258.4 475.3 259.7 476.2 261.9 C477.1 264.1 477.9 269.7 478.6 271.4 C479.3 273.1 479.5 273.2 480.2 272.2 C480.9 271.1 481.7 267.6 482.6 265.1 C483.5 262.6 484.6 259.1 485.7 257.2 C486.8 255.3 488.0 254.1 488.9 254.0 C489.8 253.9 490.5 254.0 491.3 256.4 C492.1 258.8 492.9 267.1 493.7 268.2 C494.5 269.2 494.9 264.5 496.0 262.7 C497.1 260.9 498.9 258.1 500.0 257.5 C501.1 256.9 501.5 257.2 502.5 259.2 C503.5 261.1 504.7 268.8 505.8 269.2 C506.9 269.6 507.9 263.6 509.2 261.7 C510.4 259.8 512.0 258.1 513.3 257.5 C514.5 256.9 515.5 258.7 516.7 258.3 C518.0 257.9 519.5 254.2 520.8 255.0 C522.0 255.8 523.0 263.6 524.2 263.3 C525.5 263.0 526.8 256.4 528.3 253.3 C529.8 250.2 532.0 246.1 533.3 245.0 C534.5 243.9 534.8 243.4 535.8 246.7 C536.8 250.0 538.0 263.6 539.2 265.0 C540.5 266.4 541.4 259.4 543.3 255.0 C545.2 250.6 548.8 240.0 550.8 238.3 C552.8 236.6 553.6 241.9 555.0 245.0 C556.4 248.1 557.8 254.5 559.2 256.7 C560.6 258.9 562.0 259.4 563.3 258.3 C564.5 257.2 565.3 251.9 566.7 250.0 C568.1 248.1 569.9 245.2 571.7 246.7 C573.5 248.2 575.8 258.1 577.5 259.2 C579.2 260.3 580.0 256.2 581.7 253.3 C583.4 250.4 586.1 242.7 587.5 241.7 C588.9 240.7 589.6 246.5 590.0 247.5" fill="none" stroke="#f0b8dc" stroke-width="1.4" opacity="0.7" transform="translate(0.8,0.5)"/><path d="M408.2 278.5 C408.6 278.4 409.7 279.1 410.5 277.7 C411.3 276.2 412.1 272.0 412.9 269.8 C413.7 267.6 414.4 265.4 415.3 264.3 C416.2 263.2 417.6 263.1 418.5 263.5 C419.4 263.9 420.2 265.5 420.8 266.7 C421.4 267.9 421.6 269.9 422.4 270.6 C423.2 271.3 424.6 271.1 425.6 271.1 C426.7 271.1 427.6 271.9 428.7 270.6 C429.8 269.3 430.8 265.7 431.9 263.5 C433.0 261.3 434.2 258.6 435.1 257.2 C436.0 255.8 436.7 255.3 437.5 255.3 C438.3 255.3 439.0 255.4 439.8 257.2 C440.6 259.0 441.3 264.3 442.2 265.9 C443.1 267.5 444.3 266.4 445.4 266.7 C446.4 267.0 447.6 267.2 448.5 267.5 C449.4 267.8 450.1 269.0 450.9 268.6 C451.7 268.2 452.5 265.7 453.3 265.1 C454.1 264.5 454.9 263.9 455.7 265.1 C456.5 266.3 457.2 270.8 458.0 272.2 C458.8 273.6 459.5 273.7 460.4 273.8 C461.3 273.9 462.6 274.4 463.6 273.0 C464.7 271.6 465.6 267.4 466.7 265.1 C467.8 262.9 468.8 260.7 469.9 259.5 C471.0 258.3 472.1 257.6 473.1 258.0 C474.2 258.4 475.3 259.7 476.2 261.9 C477.1 264.1 477.9 269.7 478.6 271.4 C479.3 273.1 479.5 273.2 480.2 272.2 C480.9 271.1 481.7 267.6 482.6 265.1 C483.5 262.6 484.6 259.1 485.7 257.2 C486.8 255.3 488.0 254.1 488.9 254.0 C489.8 253.9 490.5 254.0 491.3 256.4 C492.1 258.8 492.9 267.1 493.7 268.2 C494.5 269.2 494.9 264.5 496.0 262.7 C497.1 260.9 498.9 258.1 500.0 257.5 C501.1 256.9 501.5 257.2 502.5 259.2 C503.5 261.1 504.7 268.8 505.8 269.2 C506.9 269.6 507.9 263.6 509.2 261.7 C510.4 259.8 512.0 258.1 513.3 257.5 C514.5 256.9 515.5 258.7 516.7 258.3 C518.0 257.9 519.5 254.2 520.8 255.0 C522.0 255.8 523.0 263.6 524.2 263.3 C525.5 263.0 526.8 256.4 528.3 253.3 C529.8 250.2 532.0 246.1 533.3 245.0 C534.5 243.9 534.8 243.4 535.8 246.7 C536.8 250.0 538.0 263.6 539.2 265.0 C540.5 266.4 541.4 259.4 543.3 255.0 C545.2 250.6 548.8 240.0 550.8 238.3 C552.8 236.6 553.6 241.9 555.0 245.0 C556.4 248.1 557.8 254.5 559.2 256.7 C560.6 258.9 562.0 259.4 563.3 258.3 C564.5 257.2 565.3 251.9 566.7 250.0 C568.1 248.1 569.9 245.2 571.7 246.7 C573.5 248.2 575.8 258.1 577.5 259.2 C579.2 260.3 580.0 256.2 581.7 253.3 C583.4 250.4 586.1 242.7 587.5 241.7 C588.9 240.7 589.6 246.5 590.0 247.5" fill="none" stroke="#704e70" stroke-width="1.2"/></svg>
<div class="yl r" style="right:198.00px;top:239.10px;font-size:8.5px;">800</div>
<div class="yl r" style="right:198.00px;top:254.10px;font-size:8.5px;">600</div>
<div class="yl r" style="right:198.00px;top:269.10px;font-size:8.5px;">400</div>
<div class="yl" style="left:396.8px;width:20px;text-align:center;top:280.10px;font-size:8.5px">0</div>
<div class="yl" style="left:433.4px;width:20px;text-align:center;top:280.10px;font-size:8.5px">2</div>
<div class="yl" style="left:470.0px;width:20px;text-align:center;top:280.10px;font-size:8.5px">4</div>
<div class="yl" style="left:506.6px;width:20px;text-align:center;top:280.10px;font-size:8.5px">6</div>
<div class="yl" style="left:543.2px;width:20px;text-align:center;top:280.10px;font-size:8.5px">8</div>
<div class="yl" style="left:579.8px;width:20px;text-align:center;top:280.10px;font-size:8.5px">10</div>
<div class="yl" style="left:508.70px;top:280.74px;font-size:7.4px;">µm</div>
<div class="yl" style="left:411.7px;top:262.0px;transform:rotate(-90deg);transform-origin:0 0;font-size:6.4px;color:#333">10<span style="font-size:5px;position:relative;top:-3.4px">3</span></div>
<div class="gw" style="left:159px;top:293px;height:159px"></div>
<div class="a" style="left:159px;top:293px;width:218px;height:17px;border-radius:5px 5px 0 0;background:linear-gradient(#9cb4f0,#84a0e8 14%,#7494e0 32%,#7090df 68%,#7698e4)"></div>
<div class="a" style="left:161px;top:309.5px;width:214px;height:142.5px;background:#fff"></div>
<svg class="a" style="left:162.6px;top:296.5px" width="9" height="9.5"><rect x="0" y="0" width="9" height="9" fill="#e6cdea"/><path d="M1.2 2.2C2.6 1.8 3.4 4 4.2 5.6C5 7 6.2 6.2 7 6.6C8 7 8.6 7.6 9 8.6H1.2Z" fill="#e0506e"/><path d="M2 5.5C2.6 6.5 3.6 7.2 3.6 8.6H1.2V5Z" fill="#f2e0f0" opacity="0.6"/><path d="M0.6 0V9H9" stroke="#3a2a40" stroke-width="1.1" fill="none"/></svg>
<div class="gt" style="left:172.90px;top:298.34px;font-size:7.4px;transform:scaleX(1.017);transform-origin:0 0">DeflectionTrace</div>
<div class="gt" style="left:229.50px;top:298.64px;font-size:7.4px;font-weight:normal">|</div>
<div class="gt" style="left:235.50px;top:298.34px;font-size:7.4px;transform:scaleX(1.155);transform-origin:0 0">00:02:57</div>
<div class="gb" style="left:337px;top:297px;width:10.6px;height:10.4px;border:0.8px solid #98aeea;background:linear-gradient(135deg,#84a6f4,#5079e4 50%,#4068d8)"></div>
<div class="a" style="left:339.6px;top:303.6px;width:3.6px;height:2px;background:#fff"></div>
<div class="gb" style="left:350px;top:297px;width:10.6px;height:10.4px;border:0.8px solid #98aeea;background:linear-gradient(135deg,#84a6f4,#5079e4 50%,#4068d8)"></div>
<div class="a" style="left:352px;top:299px;width:6.8px;height:6.4px;border:0.8px solid #f4f8ff;border-top-width:1.8px"></div>
<div class="gb" style="left:362.2px;top:297px;width:10.6px;height:10.4px;border:0.8px solid #98aeea;background:linear-gradient(135deg,#e4a0b0,#c87080 50%,#b86474)"></div>
<svg class="a" style="left:362.2px;top:297px" width="11" height="11"><path d="M2.8 2.8L7.8 7.8M7.8 2.8L2.8 7.8" stroke="#fff" stroke-width="1.3"/></svg>
<div class="a" style="left:187.0px;top:314.5px;width:184px;height:138px;background:#333"></div>
<div class="a" style="left:187.5px;top:315px;width:182.5px;height:137px;background:#8a8a8a"></div>
<div class="a" style="left:187.5px;top:438.8px;width:11px;height:2.2px;background:#d82828"></div>
<div class="a" style="left:187.5px;top:443px;width:183px;height:10px;background:repeating-linear-gradient(150deg,rgba(255,255,255,0.04) 0 2px,rgba(0,0,0,0.04) 2px 6px)"></div>
<div class="yl r" style="right:413.50px;top:310.10px;font-size:8.5px;">10</div>
<div class="a" style="left:185.0px;top:314.5px;width:2.5px;height:1px;background:#333"></div>
<div class="yl r" style="right:413.50px;top:346.70px;font-size:8.5px;">8</div>
<div class="a" style="left:185.0px;top:351.1px;width:2.5px;height:1px;background:#333"></div>
<div class="yl r" style="right:413.50px;top:383.30px;font-size:8.5px;">6</div>
<div class="a" style="left:185.0px;top:387.7px;width:2.5px;height:1px;background:#333"></div>
<div class="yl r" style="right:413.50px;top:419.90px;font-size:8.5px;">4</div>
<div class="a" style="left:185.0px;top:424.3px;width:2.5px;height:1px;background:#333"></div>
<div class="yl" style="left:164.80px;top:386.94px;font-size:7.4px;">µm</div>
<div class="gw" style="left:381px;top:293px;height:159px"></div>
<div class="a" style="left:381px;top:293px;width:218px;height:17px;border-radius:5px 5px 0 0;background:linear-gradient(#9cb4f0,#84a0e8 14%,#7494e0 32%,#7090df 68%,#7698e4)"></div>
<div class="a" style="left:383px;top:309.5px;width:214px;height:142.5px;background:#fff"></div>
<svg class="a" style="left:384.6px;top:296.5px" width="9" height="9.5"><rect x="0" y="0" width="9" height="9" fill="#e6cdea"/><path d="M1.2 2.2C2.6 1.8 3.4 4 4.2 5.6C5 7 6.2 6.2 7 6.6C8 7 8.6 7.6 9 8.6H1.2Z" fill="#e0506e"/><path d="M2 5.5C2.6 6.5 3.6 7.2 3.6 8.6H1.2V5Z" fill="#f2e0f0" opacity="0.6"/><path d="M0.6 0V9H9" stroke="#3a2a40" stroke-width="1.1" fill="none"/></svg>
<div class="gt" style="left:395.70px;top:298.34px;font-size:7.4px;transform:scaleX(0.985);transform-origin:0 0">DeflectionRetrace</div>
<div class="gt" style="left:459.30px;top:298.64px;font-size:7.4px;font-weight:normal">|</div>
<div class="gt" style="left:465.30px;top:298.34px;font-size:7.4px;transform:scaleX(1.155);transform-origin:0 0">00:02:57</div>
<div class="gb" style="left:559px;top:297px;width:10.6px;height:10.4px;border:0.8px solid #98aeea;background:linear-gradient(135deg,#84a6f4,#5079e4 50%,#4068d8)"></div>
<div class="a" style="left:561.6px;top:303.6px;width:3.6px;height:2px;background:#fff"></div>
<div class="gb" style="left:572px;top:297px;width:10.6px;height:10.4px;border:0.8px solid #98aeea;background:linear-gradient(135deg,#84a6f4,#5079e4 50%,#4068d8)"></div>
<div class="a" style="left:574px;top:299px;width:6.8px;height:6.4px;border:0.8px solid #f4f8ff;border-top-width:1.8px"></div>
<div class="gb" style="left:584.2px;top:297px;width:10.6px;height:10.4px;border:0.8px solid #98aeea;background:linear-gradient(135deg,#e4a0b0,#c87080 50%,#b86474)"></div>
<svg class="a" style="left:584.2px;top:297px" width="11" height="11"><path d="M2.8 2.8L7.8 7.8M7.8 2.8L2.8 7.8" stroke="#fff" stroke-width="1.3"/></svg>
<div class="a" style="left:409.0px;top:314.5px;width:184px;height:138px;background:#333"></div>
<div class="a" style="left:409.5px;top:315px;width:182.5px;height:137px;background:#8a8a8a"></div>
<div class="a" style="left:409.5px;top:438.8px;width:11px;height:2.2px;background:#d82828"></div>
<div class="a" style="left:409.5px;top:443px;width:183px;height:10px;background:repeating-linear-gradient(150deg,rgba(255,255,255,0.04) 0 2px,rgba(0,0,0,0.04) 2px 6px)"></div>
<div class="yl r" style="right:191.50px;top:310.10px;font-size:8.5px;">10</div>
<div class="a" style="left:407.0px;top:314.5px;width:2.5px;height:1px;background:#333"></div>
<div class="yl r" style="right:191.50px;top:346.70px;font-size:8.5px;">8</div>
<div class="a" style="left:407.0px;top:351.1px;width:2.5px;height:1px;background:#333"></div>
<div class="yl r" style="right:191.50px;top:383.30px;font-size:8.5px;">6</div>
<div class="a" style="left:407.0px;top:387.7px;width:2.5px;height:1px;background:#333"></div>
<div class="yl r" style="right:191.50px;top:419.90px;font-size:8.5px;">4</div>
<div class="a" style="left:407.0px;top:424.3px;width:2.5px;height:1px;background:#333"></div>
<div class="yl" style="left:386.80px;top:386.94px;font-size:7.4px;">µm</div>
</div></div></body></html>
